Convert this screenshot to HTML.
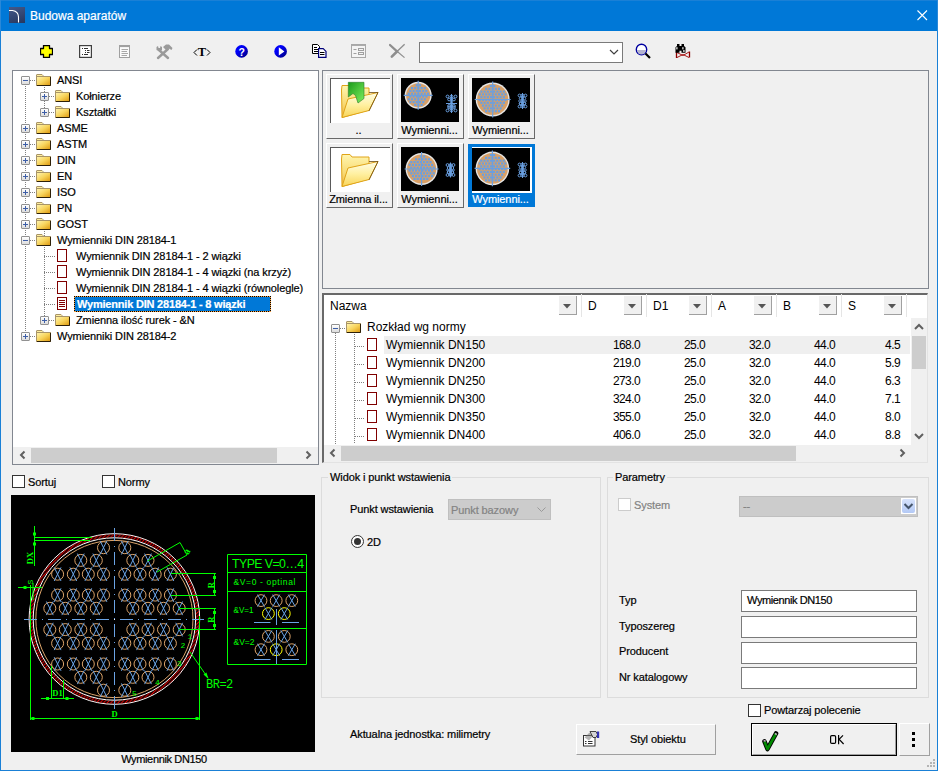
<!DOCTYPE html><html><head><meta charset="utf-8"><style>
*{box-sizing:border-box;margin:0;padding:0}
html,body{width:938px;height:771px;overflow:hidden;background:#f0f0f0;font-family:"Liberation Sans",sans-serif;font-size:11px;color:#000}
.a{position:absolute}
.t{position:absolute;white-space:nowrap;line-height:13px;letter-spacing:-0.1px;-webkit-text-stroke:0.2px currentColor}
.box{position:absolute;width:9px;height:9px;border:1px solid #919191;border-radius:1px;background:linear-gradient(#fff,#dcdcdc)}
.box:before{content:"";position:absolute;left:1px;top:3px;width:5px;height:1px;background:#3d5ea7}
.box.p:after{content:"";position:absolute;left:3px;top:1px;width:1px;height:5px;background:#3d5ea7}
.doc{position:absolute;width:10px;height:13px;border:1px solid #800000;background:#fff}
.panel{position:absolute;border:1px solid #828790;background:#fff}
.cb{position:absolute;width:13px;height:13px;border:1px solid #333;background:#fff}
.tb{position:absolute;border:1px solid #7a7a7a;background:#fff}
</style></head><body>
<div class="a" style="left:0;top:0;width:938px;height:771px;border:1px solid #1a80d6;border-top:0"></div>
<div class="a" style="left:0;top:0;width:938px;height:31px;background:#0078d7"></div>
<div class="a" style="left:9px;top:7px;width:16px;height:16px;background:linear-gradient(160deg,#44598a,#26375f)"></div>
<svg class="a" style="left:9px;top:7px" width="16" height="16"><path d="M0 3.5 H3.5 Q9.5 4.5 9.5 10 V15.5" stroke="#fff" stroke-width="1.1" fill="none"/></svg>
<div class="t" style="left:30px;top:9px;font-size:12px;color:#fff;line-height:15px;letter-spacing:0">Budowa aparatów</div>
<svg class="a" style="left:917px;top:10px" width="11" height="11"><path d="M0.5 0.5L10 10M10 0.5L0.5 10" stroke="#fff" stroke-width="1.1"/></svg>
<div class="a" style="left:0;top:0;width:938px;height:1px;background:#1a80d6"></div>
<div class="a" style="left:937px;top:0;width:1px;height:31px;background:#2a88d8"></div>
<div class="a" style="left:0;top:0;width:1px;height:31px;background:#2a88d8"></div>
<svg class="a" style="left:40px;top:45px" width="13" height="13"><path d="M3.5 0.5h6v3h3v6h-3v3h-6v-3h-3v-6h3z" fill="#ffff00" stroke="#000" stroke-width="1.3" stroke-linejoin="round"/></svg>
<svg class="a" style="left:79px;top:45px" width="13" height="13"><rect x="0.6" y="0.6" width="11.8" height="11.8" fill="#fff" stroke="#404040" stroke-width="1.2"/><path d="M3 3.5h1M5 3.5h4M6 5.5h1M8 5.5h2.5M6 7.5h1M8 7.5h2.5M3 9.5h1M5 9.5h4" stroke="#303030"/></svg>
<svg class="a" style="left:119px;top:45px" width="11" height="13"><rect x="0.5" y="0.5" width="10" height="12" fill="#fbfbfb" stroke="#a0a0a0"/><path d="M0.5 1.3h10" stroke="#a0a0a0" stroke-width="1.6"/><path d="M2.5 4.5h6.5M2.5 6.5h5.5M2.5 8.5h6.5M2.5 10.5h5.5" stroke="#a8a8a8"/></svg>
<svg class="a" style="left:155px;top:43px" width="18" height="17"><path d="M3 15 L13 6" stroke="#9a9a9a" stroke-width="2.4" stroke-linecap="round"/><path d="M4 7 L13 15" stroke="#9a9a9a" stroke-width="2.4" stroke-linecap="round"/><path d="M8 4 L11 1.5 L14 1.5 L17.5 5 L16.5 7 L13 5 L11 7 Z" fill="#9a9a9a"/><path d="M1.5 4 L3 3 L3.5 5 L5 5 L5.5 3 L7 4 L7 7 L4.5 8.5 L1.5 7Z" fill="#9a9a9a"/></svg>
<svg class="a" style="left:192px;top:45px" width="20" height="13"><path d="M5 4.5 L2 7.5 L5 10.5" fill="none" stroke="#000" stroke-width="1"/><path d="M15 4.5 L18 7.5 L15 10.5" fill="none" stroke="#000" stroke-width="1"/><text x="10" y="10.8" text-anchor="middle" font-family="Liberation Serif" font-weight="bold" font-size="12.5" fill="#000">T</text></svg>
<svg class="a" style="left:235px;top:45px" width="14" height="14"><defs><linearGradient id="bc" x1="0" y1="0" x2="1" y2="1"><stop offset="0.35" stop-color="#0000f8"/><stop offset="1" stop-color="#000078"/></linearGradient></defs><circle cx="6.6" cy="6.4" r="6.3" fill="url(#bc)"/><text x="6.6" y="10.6" text-anchor="middle" font-family="Liberation Sans" font-weight="bold" font-size="10.5" fill="#fff">?</text></svg>
<svg class="a" style="left:274px;top:45px" width="14" height="14"><circle cx="6.6" cy="6.4" r="6.3" fill="url(#bc)"/><path d="M4.8 2.3 L10.4 6.4 L4.8 10.6Z" fill="#fff"/></svg>
<svg class="a" style="left:312px;top:44px" width="16" height="14"><path d="M0.5 0.5h5l2 2v7h-7z" fill="#fff" stroke="#000"/><path d="M2 3.5h3M2 5.5h4M2 7.5h4" stroke="#000"/><path d="M6.6 4.6h4.6l2.8 2.8v6h-7.4z" fill="#fff" stroke="#00007a" stroke-width="1.2"/><path d="M8 8.5h4.5M8 10.5h4.5" stroke="#000" stroke-width="1"/></svg>
<svg class="a" style="left:351px;top:44px" width="15" height="14"><rect x="0.5" y="0.5" width="14" height="13" fill="#f4f4f4" stroke="#a8a8a8"/><path d="M0.5 1.2h14" stroke="#a8a8a8" stroke-width="1.5"/><path d="M2.5 5.5h3M2.5 9.5h3" stroke="#a0a0a0"/><rect x="7.5" y="4.5" width="5" height="2" fill="none" stroke="#a0a0a0"/><rect x="7.5" y="8.5" width="5" height="2" fill="none" stroke="#a0a0a0"/></svg>
<svg class="a" style="left:389px;top:43px" width="17" height="16"><path d="M1 2 L8 8.3" stroke="#8e8e8e" stroke-width="2.3" stroke-linecap="round"/><path d="M8 8.3 L15.5 14.6" stroke="#8e8e8e" stroke-width="1.2"/><path d="M2.8 13.6 L8 8.5" stroke="#8e8e8e" stroke-width="2.6" stroke-linecap="round"/><path d="M8 8.5 L15.6 1.3" stroke="#8e8e8e" stroke-width="1.3"/></svg>
<div class="tb" style="left:419px;top:42px;width:204px;height:21px;border-color:#7a7a7a"></div>
<svg class="a" style="left:609px;top:49px" width="11" height="7"><path d="M1 1 L5 5 L9 1" fill="none" stroke="#404040" stroke-width="1.2"/></svg>
<svg class="a" style="left:635px;top:43px" width="17" height="17"><circle cx="6.5" cy="6.5" r="5.2" fill="#fff" stroke="#0000a0" stroke-width="1.4"/><path d="M2 7 A4.5 4.5 0 0 0 11 7Z" fill="#b4b4d0"/><path d="M10.5 10.5 L15 15" stroke="#000" stroke-width="2.2"/></svg>
<svg class="a" style="left:675px;top:43px" width="16" height="16"><path d="M1.5 8.5v6.5M14.5 8.5v6" stroke="#8c0000" stroke-width="1.3"/><path d="M2 9.5 L8 12.5 L14 9M2 14.5 L8 11.5 L14 14.5" fill="none" stroke="#a00000" stroke-width="0.9"/><path d="M2 1 h2.5 v2 h2 v-2 h2.5 v2 l1.5 1.2 v5.5 h-4 v-2 h-2 v2 h-4 v-5.5 l1.5 -1.2z" fill="#000"/><rect x="1.3" y="4.2" width="1.2" height="2.2" fill="#fff"/><rect x="7.3" y="4.2" width="1.2" height="2.2" fill="#fff"/><rect x="8.3" y="7" width="1.2" height="2" fill="#fff"/></svg>
<div class="panel" style="left:12px;top:70px;width:307px;height:395px"></div>
<div class="a" style="left:25px;top:86px;width:1px;height:250px;background-image:linear-gradient(#808080 50%,transparent 50%);background-size:1px 2px"></div>
<div class="a" style="left:44px;top:87px;width:1px;height:25px;background-image:linear-gradient(#808080 50%,transparent 50%);background-size:1px 2px"></div>
<div class="a" style="left:44px;top:231px;width:1px;height:89px;background-image:linear-gradient(#808080 50%,transparent 50%);background-size:1px 2px"></div>
<div class="a" style="left:30px;top:80px;width:6px;height:1px;background-image:linear-gradient(90deg,#808080 50%,transparent 50%);background-size:2px 1px"></div>
<div class="box " style="left:21px;top:76px"></div>
<svg class="a" style="left:36px;top:74px" width="16" height="13"><defs><linearGradient id="fg" x1="0" y1="0" x2="1" y2="1"><stop offset="0" stop-color="#fff6b4"/><stop offset="0.5" stop-color="#f8d45c"/><stop offset="1" stop-color="#dc960c"/></linearGradient></defs><path d="M0.5 3 V1 Q0.5 0.5 1 0.5 H6 L7 1.5 V3" fill="#fff0a0" stroke="#a89468" stroke-width="1"/><rect x="0.5" y="2.5" width="14" height="9" fill="url(#fg)" stroke="#a89468" stroke-width="1"/><path d="M1 11.5 H14.5 V3" fill="none" stroke="#2e2008" stroke-width="1"/></svg>
<div class="t" style="left:57px;top:74px;">ANSI</div>
<div class="a" style="left:49px;top:96px;width:6px;height:1px;background-image:linear-gradient(90deg,#808080 50%,transparent 50%);background-size:2px 1px"></div>
<div class="box p" style="left:40px;top:92px"></div>
<svg class="a" style="left:55px;top:90px" width="16" height="13"><defs><linearGradient id="fg" x1="0" y1="0" x2="1" y2="1"><stop offset="0" stop-color="#fff6b4"/><stop offset="0.5" stop-color="#f8d45c"/><stop offset="1" stop-color="#dc960c"/></linearGradient></defs><path d="M0.5 3 V1 Q0.5 0.5 1 0.5 H6 L7 1.5 V3" fill="#fff0a0" stroke="#a89468" stroke-width="1"/><rect x="0.5" y="2.5" width="14" height="9" fill="url(#fg)" stroke="#a89468" stroke-width="1"/><path d="M1 11.5 H14.5 V3" fill="none" stroke="#2e2008" stroke-width="1"/></svg>
<div class="t" style="left:76px;top:90px;">Kołnierze</div>
<div class="a" style="left:49px;top:112px;width:6px;height:1px;background-image:linear-gradient(90deg,#808080 50%,transparent 50%);background-size:2px 1px"></div>
<div class="box p" style="left:40px;top:108px"></div>
<svg class="a" style="left:55px;top:106px" width="16" height="13"><defs><linearGradient id="fg" x1="0" y1="0" x2="1" y2="1"><stop offset="0" stop-color="#fff6b4"/><stop offset="0.5" stop-color="#f8d45c"/><stop offset="1" stop-color="#dc960c"/></linearGradient></defs><path d="M0.5 3 V1 Q0.5 0.5 1 0.5 H6 L7 1.5 V3" fill="#fff0a0" stroke="#a89468" stroke-width="1"/><rect x="0.5" y="2.5" width="14" height="9" fill="url(#fg)" stroke="#a89468" stroke-width="1"/><path d="M1 11.5 H14.5 V3" fill="none" stroke="#2e2008" stroke-width="1"/></svg>
<div class="t" style="left:76px;top:106px;">Kształtki</div>
<div class="a" style="left:30px;top:128px;width:6px;height:1px;background-image:linear-gradient(90deg,#808080 50%,transparent 50%);background-size:2px 1px"></div>
<div class="box p" style="left:21px;top:124px"></div>
<svg class="a" style="left:36px;top:122px" width="16" height="13"><defs><linearGradient id="fg" x1="0" y1="0" x2="1" y2="1"><stop offset="0" stop-color="#fff6b4"/><stop offset="0.5" stop-color="#f8d45c"/><stop offset="1" stop-color="#dc960c"/></linearGradient></defs><path d="M0.5 3 V1 Q0.5 0.5 1 0.5 H6 L7 1.5 V3" fill="#fff0a0" stroke="#a89468" stroke-width="1"/><rect x="0.5" y="2.5" width="14" height="9" fill="url(#fg)" stroke="#a89468" stroke-width="1"/><path d="M1 11.5 H14.5 V3" fill="none" stroke="#2e2008" stroke-width="1"/></svg>
<div class="t" style="left:57px;top:122px;">ASME</div>
<div class="a" style="left:30px;top:144px;width:6px;height:1px;background-image:linear-gradient(90deg,#808080 50%,transparent 50%);background-size:2px 1px"></div>
<div class="box p" style="left:21px;top:140px"></div>
<svg class="a" style="left:36px;top:138px" width="16" height="13"><defs><linearGradient id="fg" x1="0" y1="0" x2="1" y2="1"><stop offset="0" stop-color="#fff6b4"/><stop offset="0.5" stop-color="#f8d45c"/><stop offset="1" stop-color="#dc960c"/></linearGradient></defs><path d="M0.5 3 V1 Q0.5 0.5 1 0.5 H6 L7 1.5 V3" fill="#fff0a0" stroke="#a89468" stroke-width="1"/><rect x="0.5" y="2.5" width="14" height="9" fill="url(#fg)" stroke="#a89468" stroke-width="1"/><path d="M1 11.5 H14.5 V3" fill="none" stroke="#2e2008" stroke-width="1"/></svg>
<div class="t" style="left:57px;top:138px;">ASTM</div>
<div class="a" style="left:30px;top:160px;width:6px;height:1px;background-image:linear-gradient(90deg,#808080 50%,transparent 50%);background-size:2px 1px"></div>
<div class="box p" style="left:21px;top:156px"></div>
<svg class="a" style="left:36px;top:154px" width="16" height="13"><defs><linearGradient id="fg" x1="0" y1="0" x2="1" y2="1"><stop offset="0" stop-color="#fff6b4"/><stop offset="0.5" stop-color="#f8d45c"/><stop offset="1" stop-color="#dc960c"/></linearGradient></defs><path d="M0.5 3 V1 Q0.5 0.5 1 0.5 H6 L7 1.5 V3" fill="#fff0a0" stroke="#a89468" stroke-width="1"/><rect x="0.5" y="2.5" width="14" height="9" fill="url(#fg)" stroke="#a89468" stroke-width="1"/><path d="M1 11.5 H14.5 V3" fill="none" stroke="#2e2008" stroke-width="1"/></svg>
<div class="t" style="left:57px;top:154px;">DIN</div>
<div class="a" style="left:30px;top:176px;width:6px;height:1px;background-image:linear-gradient(90deg,#808080 50%,transparent 50%);background-size:2px 1px"></div>
<div class="box p" style="left:21px;top:172px"></div>
<svg class="a" style="left:36px;top:170px" width="16" height="13"><defs><linearGradient id="fg" x1="0" y1="0" x2="1" y2="1"><stop offset="0" stop-color="#fff6b4"/><stop offset="0.5" stop-color="#f8d45c"/><stop offset="1" stop-color="#dc960c"/></linearGradient></defs><path d="M0.5 3 V1 Q0.5 0.5 1 0.5 H6 L7 1.5 V3" fill="#fff0a0" stroke="#a89468" stroke-width="1"/><rect x="0.5" y="2.5" width="14" height="9" fill="url(#fg)" stroke="#a89468" stroke-width="1"/><path d="M1 11.5 H14.5 V3" fill="none" stroke="#2e2008" stroke-width="1"/></svg>
<div class="t" style="left:57px;top:170px;">EN</div>
<div class="a" style="left:30px;top:192px;width:6px;height:1px;background-image:linear-gradient(90deg,#808080 50%,transparent 50%);background-size:2px 1px"></div>
<div class="box p" style="left:21px;top:188px"></div>
<svg class="a" style="left:36px;top:186px" width="16" height="13"><defs><linearGradient id="fg" x1="0" y1="0" x2="1" y2="1"><stop offset="0" stop-color="#fff6b4"/><stop offset="0.5" stop-color="#f8d45c"/><stop offset="1" stop-color="#dc960c"/></linearGradient></defs><path d="M0.5 3 V1 Q0.5 0.5 1 0.5 H6 L7 1.5 V3" fill="#fff0a0" stroke="#a89468" stroke-width="1"/><rect x="0.5" y="2.5" width="14" height="9" fill="url(#fg)" stroke="#a89468" stroke-width="1"/><path d="M1 11.5 H14.5 V3" fill="none" stroke="#2e2008" stroke-width="1"/></svg>
<div class="t" style="left:57px;top:186px;">ISO</div>
<div class="a" style="left:30px;top:208px;width:6px;height:1px;background-image:linear-gradient(90deg,#808080 50%,transparent 50%);background-size:2px 1px"></div>
<div class="box p" style="left:21px;top:204px"></div>
<svg class="a" style="left:36px;top:202px" width="16" height="13"><defs><linearGradient id="fg" x1="0" y1="0" x2="1" y2="1"><stop offset="0" stop-color="#fff6b4"/><stop offset="0.5" stop-color="#f8d45c"/><stop offset="1" stop-color="#dc960c"/></linearGradient></defs><path d="M0.5 3 V1 Q0.5 0.5 1 0.5 H6 L7 1.5 V3" fill="#fff0a0" stroke="#a89468" stroke-width="1"/><rect x="0.5" y="2.5" width="14" height="9" fill="url(#fg)" stroke="#a89468" stroke-width="1"/><path d="M1 11.5 H14.5 V3" fill="none" stroke="#2e2008" stroke-width="1"/></svg>
<div class="t" style="left:57px;top:202px;">PN</div>
<div class="a" style="left:30px;top:224px;width:6px;height:1px;background-image:linear-gradient(90deg,#808080 50%,transparent 50%);background-size:2px 1px"></div>
<div class="box p" style="left:21px;top:220px"></div>
<svg class="a" style="left:36px;top:218px" width="16" height="13"><defs><linearGradient id="fg" x1="0" y1="0" x2="1" y2="1"><stop offset="0" stop-color="#fff6b4"/><stop offset="0.5" stop-color="#f8d45c"/><stop offset="1" stop-color="#dc960c"/></linearGradient></defs><path d="M0.5 3 V1 Q0.5 0.5 1 0.5 H6 L7 1.5 V3" fill="#fff0a0" stroke="#a89468" stroke-width="1"/><rect x="0.5" y="2.5" width="14" height="9" fill="url(#fg)" stroke="#a89468" stroke-width="1"/><path d="M1 11.5 H14.5 V3" fill="none" stroke="#2e2008" stroke-width="1"/></svg>
<div class="t" style="left:57px;top:218px;">GOST</div>
<div class="a" style="left:30px;top:240px;width:6px;height:1px;background-image:linear-gradient(90deg,#808080 50%,transparent 50%);background-size:2px 1px"></div>
<div class="box " style="left:21px;top:236px"></div>
<svg class="a" style="left:36px;top:234px" width="16" height="13"><defs><linearGradient id="fg" x1="0" y1="0" x2="1" y2="1"><stop offset="0" stop-color="#fff6b4"/><stop offset="0.5" stop-color="#f8d45c"/><stop offset="1" stop-color="#dc960c"/></linearGradient></defs><path d="M0.5 3 V1 Q0.5 0.5 1 0.5 H6 L7 1.5 V3" fill="#fff0a0" stroke="#a89468" stroke-width="1"/><rect x="0.5" y="2.5" width="14" height="9" fill="url(#fg)" stroke="#a89468" stroke-width="1"/><path d="M1 11.5 H14.5 V3" fill="none" stroke="#2e2008" stroke-width="1"/></svg>
<div class="t" style="left:57px;top:234px;">Wymienniki DIN 28184-1</div>
<div class="a" style="left:44px;top:256px;width:11px;height:1px;background-image:linear-gradient(90deg,#808080 50%,transparent 50%);background-size:2px 1px"></div>
<div class="doc" style="left:57px;top:249px"></div>
<div class="t" style="left:76px;top:250px;">Wymiennik DIN 28184-1 - 2 wiązki</div>
<div class="a" style="left:44px;top:272px;width:11px;height:1px;background-image:linear-gradient(90deg,#808080 50%,transparent 50%);background-size:2px 1px"></div>
<div class="doc" style="left:57px;top:265px"></div>
<div class="t" style="left:76px;top:266px;">Wymiennik DIN 28184-1 - 4 wiązki (na krzyż)</div>
<div class="a" style="left:44px;top:288px;width:11px;height:1px;background-image:linear-gradient(90deg,#808080 50%,transparent 50%);background-size:2px 1px"></div>
<div class="doc" style="left:57px;top:281px"></div>
<div class="t" style="left:76px;top:282px;">Wymiennik DIN 28184-1 - 4 wiązki (równolegle)</div>
<div class="a" style="left:44px;top:304px;width:11px;height:1px;background-image:linear-gradient(90deg,#808080 50%,transparent 50%);background-size:2px 1px"></div>
<div class="doc" style="left:57px;top:297px"></div>
<svg class="a" style="left:57px;top:297px" width="10" height="13"><path d="M2 3.5h6M2 5.5h6M2 7.5h6M2 9.5h6" stroke="#800000"/></svg>
<div class="a" style="left:74px;top:296px;width:197px;height:16px;background:#0078d7"></div>
<div class="a" style="left:74px;top:296px;width:197px;height:1px;background:repeating-linear-gradient(90deg,#000 0 1px,#f7a241 1px 2px)"></div>
<div class="a" style="left:74px;top:311px;width:197px;height:1px;background:repeating-linear-gradient(90deg,#000 0 1px,#f7a241 1px 2px)"></div>
<div class="a" style="left:74px;top:296px;width:1px;height:16px;background:repeating-linear-gradient(#000 0 1px,#f7a241 1px 2px)"></div>
<div class="a" style="left:270px;top:296px;width:1px;height:16px;background:repeating-linear-gradient(#000 0 1px,#f7a241 1px 2px)"></div>
<div class="t" style="left:77px;top:298px;color:#fff;font-weight:bold;letter-spacing:-0.2px">Wymiennik DIN 28184-1 - 8 wiązki</div>
<div class="a" style="left:49px;top:320px;width:6px;height:1px;background-image:linear-gradient(90deg,#808080 50%,transparent 50%);background-size:2px 1px"></div>
<div class="box p" style="left:40px;top:316px"></div>
<svg class="a" style="left:55px;top:314px" width="16" height="13"><defs><linearGradient id="fg" x1="0" y1="0" x2="1" y2="1"><stop offset="0" stop-color="#fff6b4"/><stop offset="0.5" stop-color="#f8d45c"/><stop offset="1" stop-color="#dc960c"/></linearGradient></defs><path d="M0.5 3 V1 Q0.5 0.5 1 0.5 H6 L7 1.5 V3" fill="#fff0a0" stroke="#a89468" stroke-width="1"/><rect x="0.5" y="2.5" width="14" height="9" fill="url(#fg)" stroke="#a89468" stroke-width="1"/><path d="M1 11.5 H14.5 V3" fill="none" stroke="#2e2008" stroke-width="1"/></svg>
<div class="t" style="left:76px;top:314px;">Zmienna ilość rurek - &amp;N</div>
<div class="a" style="left:30px;top:336px;width:6px;height:1px;background-image:linear-gradient(90deg,#808080 50%,transparent 50%);background-size:2px 1px"></div>
<div class="box p" style="left:21px;top:332px"></div>
<svg class="a" style="left:36px;top:330px" width="16" height="13"><defs><linearGradient id="fg" x1="0" y1="0" x2="1" y2="1"><stop offset="0" stop-color="#fff6b4"/><stop offset="0.5" stop-color="#f8d45c"/><stop offset="1" stop-color="#dc960c"/></linearGradient></defs><path d="M0.5 3 V1 Q0.5 0.5 1 0.5 H6 L7 1.5 V3" fill="#fff0a0" stroke="#a89468" stroke-width="1"/><rect x="0.5" y="2.5" width="14" height="9" fill="url(#fg)" stroke="#a89468" stroke-width="1"/><path d="M1 11.5 H14.5 V3" fill="none" stroke="#2e2008" stroke-width="1"/></svg>
<div class="t" style="left:57px;top:330px;">Wymienniki DIN 28184-2</div>
<div class="a" style="left:13px;top:447px;width:305px;height:17px;background:#f0f0f0"></div>
<div class="a" style="left:31px;top:448px;width:246px;height:15px;background:#cdcdcd"></div>
<svg class="a" style="left:18px;top:450px" width="10" height="10"><path d="M6.5 1.5 L3 5 L6.5 8.5" fill="none" stroke="#606060" stroke-width="2"/></svg>
<svg class="a" style="left:303px;top:450px" width="10" height="10"><path d="M3.5 1.5 L7 5 L3.5 8.5" fill="none" stroke="#606060" stroke-width="2"/></svg>
<div class="a" style="left:322px;top:70px;width:607px;height:219px;border:1px solid #828790;background:#f0f0f0"></div>
<div class="a" style="left:326px;top:74px;width:67px;height:65px;border:1px solid #fff;border-right-color:#696969;border-bottom-color:#696969;background:#f0f0f0"></div>
<div class="a" style="left:330px;top:78px;width:60px;height:45px;background:#fff;border-left:1px solid #5a5a5a;border-top:1px solid #5a5a5a"></div>
<svg class="a" style="left:331px;top:79px" width="58" height="44"><defs><linearGradient id="fyb" x1="0" y1="0" x2="0" y2="1"><stop offset="0" stop-color="#fff6b0"/><stop offset="0.6" stop-color="#f8d870"/><stop offset="1" stop-color="#eeb040"/></linearGradient><linearGradient id="fyf" x1="0" y1="0" x2="0" y2="1"><stop offset="0" stop-color="#fffde8"/><stop offset="0.5" stop-color="#fff0a0"/><stop offset="1" stop-color="#f8d458"/></linearGradient><linearGradient id="gg" x1="0" y1="0" x2="1" y2="1"><stop offset="0" stop-color="#1a9a1a"/><stop offset="1" stop-color="#80f060"/></linearGradient></defs><path d="M10.5 11 L11 6.5 L19 6.5 L21 9 L38 9 L38 31 L11 38.5 Z" fill="url(#fyb)" stroke="#e0a418" stroke-width="1"/><path d="M11 38.5 L17 20 L47 13.5 L38 31.5 Z" fill="url(#fyf)" stroke="#e0a418" stroke-width="1"/><path d="M38 13.5 L47 13.5 L38 32" fill="none" stroke="#6a4a10" stroke-width="0.8"/><path d="M17.3 3.3 L33 3.3 L33 19.5 L27 24 L24.5 16.5 L22 14.5 L17.3 18Z" fill="url(#gg)" stroke="#2a7a2a" stroke-width="0.6"/></svg>
<div class="t" style="left:325px;top:124px;width:67px;text-align:center;color:#000">..</div>
<div class="a" style="left:397px;top:74px;width:67px;height:65px;border:1px solid #fff;border-right-color:#696969;border-bottom-color:#696969;background:#f0f0f0"></div>
<svg class="a" style="left:401px;top:78px" width="58" height="44"><rect x="0" y="0" width="58" height="44" fill="#000"/><circle cx="17.19999999999999" cy="17.299999999999997" r="13.5" fill="#e6e6e6"/><circle cx="17.19999999999999" cy="17.299999999999997" r="12.1" fill="#d9a066"/><rect x="14.7" y="6.2" width="2.2" height="2.2" fill="#6a9fe0"/><rect x="17.9" y="6.2" width="2.2" height="2.2" fill="#6a9fe0"/><rect x="9.9" y="9.0" width="2.2" height="2.2" fill="#6a9fe0"/><rect x="13.1" y="9.0" width="2.2" height="2.2" fill="#6a9fe0"/><rect x="16.3" y="9.0" width="2.2" height="2.2" fill="#6a9fe0"/><rect x="19.5" y="9.0" width="2.2" height="2.2" fill="#6a9fe0"/><rect x="22.7" y="9.0" width="2.2" height="2.2" fill="#6a9fe0"/><rect x="8.3" y="11.8" width="2.2" height="2.2" fill="#6a9fe0"/><rect x="11.5" y="11.8" width="2.2" height="2.2" fill="#6a9fe0"/><rect x="14.7" y="11.8" width="2.2" height="2.2" fill="#6a9fe0"/><rect x="17.9" y="11.8" width="2.2" height="2.2" fill="#6a9fe0"/><rect x="21.1" y="11.8" width="2.2" height="2.2" fill="#6a9fe0"/><rect x="24.3" y="11.8" width="2.2" height="2.2" fill="#6a9fe0"/><rect x="6.7" y="14.6" width="2.2" height="2.2" fill="#6a9fe0"/><rect x="9.9" y="14.6" width="2.2" height="2.2" fill="#6a9fe0"/><rect x="13.1" y="14.6" width="2.2" height="2.2" fill="#6a9fe0"/><rect x="16.3" y="14.6" width="2.2" height="2.2" fill="#6a9fe0"/><rect x="19.5" y="14.6" width="2.2" height="2.2" fill="#6a9fe0"/><rect x="22.7" y="14.6" width="2.2" height="2.2" fill="#6a9fe0"/><rect x="25.9" y="14.6" width="2.2" height="2.2" fill="#6a9fe0"/><rect x="8.3" y="17.4" width="2.2" height="2.2" fill="#6a9fe0"/><rect x="11.5" y="17.4" width="2.2" height="2.2" fill="#6a9fe0"/><rect x="14.7" y="17.4" width="2.2" height="2.2" fill="#6a9fe0"/><rect x="17.9" y="17.4" width="2.2" height="2.2" fill="#6a9fe0"/><rect x="21.1" y="17.4" width="2.2" height="2.2" fill="#6a9fe0"/><rect x="24.3" y="17.4" width="2.2" height="2.2" fill="#6a9fe0"/><rect x="6.7" y="20.2" width="2.2" height="2.2" fill="#6a9fe0"/><rect x="9.9" y="20.2" width="2.2" height="2.2" fill="#6a9fe0"/><rect x="13.1" y="20.2" width="2.2" height="2.2" fill="#6a9fe0"/><rect x="16.3" y="20.2" width="2.2" height="2.2" fill="#6a9fe0"/><rect x="19.5" y="20.2" width="2.2" height="2.2" fill="#6a9fe0"/><rect x="22.7" y="20.2" width="2.2" height="2.2" fill="#6a9fe0"/><rect x="8.3" y="23.0" width="2.2" height="2.2" fill="#6a9fe0"/><rect x="11.5" y="23.0" width="2.2" height="2.2" fill="#6a9fe0"/><rect x="14.7" y="23.0" width="2.2" height="2.2" fill="#6a9fe0"/><rect x="17.9" y="23.0" width="2.2" height="2.2" fill="#6a9fe0"/><rect x="21.1" y="23.0" width="2.2" height="2.2" fill="#6a9fe0"/><rect x="13.1" y="25.8" width="2.2" height="2.2" fill="#6a9fe0"/><rect x="16.3" y="25.8" width="2.2" height="2.2" fill="#6a9fe0"/><rect x="19.5" y="25.8" width="2.2" height="2.2" fill="#6a9fe0"/><path d="M2.6999999999999886 17.299999999999997h29.0M17.19999999999999 2.799999999999997v29.0" stroke="#6a9fe0" stroke-width="1.2"/><circle cx="46.5" cy="18.5" r="1.4" fill="none" stroke="#6a9fe0" stroke-width="1"/><circle cx="50.5" cy="18.5" r="1.4" fill="none" stroke="#6a9fe0" stroke-width="1"/><circle cx="54.5" cy="18.5" r="1.4" fill="none" stroke="#6a9fe0" stroke-width="1"/><circle cx="48.1" cy="21.5" r="1.4" fill="none" stroke="#6a9fe0" stroke-width="1"/><circle cx="52.9" cy="21.5" r="1.4" fill="none" stroke="#6a9fe0" stroke-width="1"/><circle cx="48.1" cy="28.0" r="1.4" fill="none" stroke="#6a9fe0" stroke-width="1"/><circle cx="52.9" cy="28.0" r="1.4" fill="none" stroke="#6a9fe0" stroke-width="1"/><circle cx="48.1" cy="29.5" r="1.4" fill="none" stroke="#6a9fe0" stroke-width="1"/><circle cx="52.9" cy="29.5" r="1.4" fill="none" stroke="#6a9fe0" stroke-width="1"/><circle cx="46.5" cy="32.5" r="1.4" fill="none" stroke="#6a9fe0" stroke-width="1"/><circle cx="50.5" cy="32.5" r="1.4" fill="none" stroke="#6a9fe0" stroke-width="1"/><circle cx="54.5" cy="32.5" r="1.4" fill="none" stroke="#6a9fe0" stroke-width="1"/><path d="M45 25.5h11M50.5 16v19" stroke="#6a9fe0" stroke-width="1"/><rect x="49.0" y="19" width="3" height="13" fill="#6a9fe0" opacity="0.7"/></svg>
<div class="t" style="left:396px;top:124px;width:67px;text-align:center;color:#000">Wymienni...</div>
<div class="a" style="left:468px;top:74px;width:67px;height:65px;border:1px solid #fff;border-right-color:#696969;border-bottom-color:#696969;background:#f0f0f0"></div>
<svg class="a" style="left:472px;top:78px" width="58" height="44"><rect x="0" y="0" width="58" height="44" fill="#000"/><circle cx="20.69999999999999" cy="21.5" r="17" fill="#e6e6e6"/><circle cx="20.69999999999999" cy="21.5" r="15.6" fill="#d9a066"/><rect x="17.9" y="6.9" width="2.2" height="2.2" fill="#6a9fe0"/><rect x="21.1" y="6.9" width="2.2" height="2.2" fill="#6a9fe0"/><rect x="13.1" y="9.7" width="2.2" height="2.2" fill="#6a9fe0"/><rect x="16.3" y="9.7" width="2.2" height="2.2" fill="#6a9fe0"/><rect x="19.5" y="9.7" width="2.2" height="2.2" fill="#6a9fe0"/><rect x="22.7" y="9.7" width="2.2" height="2.2" fill="#6a9fe0"/><rect x="25.9" y="9.7" width="2.2" height="2.2" fill="#6a9fe0"/><rect x="8.3" y="12.5" width="2.2" height="2.2" fill="#6a9fe0"/><rect x="11.5" y="12.5" width="2.2" height="2.2" fill="#6a9fe0"/><rect x="14.7" y="12.5" width="2.2" height="2.2" fill="#6a9fe0"/><rect x="17.9" y="12.5" width="2.2" height="2.2" fill="#6a9fe0"/><rect x="21.1" y="12.5" width="2.2" height="2.2" fill="#6a9fe0"/><rect x="24.3" y="12.5" width="2.2" height="2.2" fill="#6a9fe0"/><rect x="27.5" y="12.5" width="2.2" height="2.2" fill="#6a9fe0"/><rect x="30.7" y="12.5" width="2.2" height="2.2" fill="#6a9fe0"/><rect x="6.7" y="15.3" width="2.2" height="2.2" fill="#6a9fe0"/><rect x="9.9" y="15.3" width="2.2" height="2.2" fill="#6a9fe0"/><rect x="13.1" y="15.3" width="2.2" height="2.2" fill="#6a9fe0"/><rect x="16.3" y="15.3" width="2.2" height="2.2" fill="#6a9fe0"/><rect x="19.5" y="15.3" width="2.2" height="2.2" fill="#6a9fe0"/><rect x="22.7" y="15.3" width="2.2" height="2.2" fill="#6a9fe0"/><rect x="25.9" y="15.3" width="2.2" height="2.2" fill="#6a9fe0"/><rect x="29.1" y="15.3" width="2.2" height="2.2" fill="#6a9fe0"/><rect x="32.3" y="15.3" width="2.2" height="2.2" fill="#6a9fe0"/><rect x="8.3" y="18.1" width="2.2" height="2.2" fill="#6a9fe0"/><rect x="11.5" y="18.1" width="2.2" height="2.2" fill="#6a9fe0"/><rect x="14.7" y="18.1" width="2.2" height="2.2" fill="#6a9fe0"/><rect x="17.9" y="18.1" width="2.2" height="2.2" fill="#6a9fe0"/><rect x="21.1" y="18.1" width="2.2" height="2.2" fill="#6a9fe0"/><rect x="24.3" y="18.1" width="2.2" height="2.2" fill="#6a9fe0"/><rect x="27.5" y="18.1" width="2.2" height="2.2" fill="#6a9fe0"/><rect x="30.7" y="18.1" width="2.2" height="2.2" fill="#6a9fe0"/><rect x="6.7" y="20.9" width="2.2" height="2.2" fill="#6a9fe0"/><rect x="9.9" y="20.9" width="2.2" height="2.2" fill="#6a9fe0"/><rect x="13.1" y="20.9" width="2.2" height="2.2" fill="#6a9fe0"/><rect x="16.3" y="20.9" width="2.2" height="2.2" fill="#6a9fe0"/><rect x="19.5" y="20.9" width="2.2" height="2.2" fill="#6a9fe0"/><rect x="22.7" y="20.9" width="2.2" height="2.2" fill="#6a9fe0"/><rect x="25.9" y="20.9" width="2.2" height="2.2" fill="#6a9fe0"/><rect x="29.1" y="20.9" width="2.2" height="2.2" fill="#6a9fe0"/><rect x="32.3" y="20.9" width="2.2" height="2.2" fill="#6a9fe0"/><rect x="8.3" y="23.7" width="2.2" height="2.2" fill="#6a9fe0"/><rect x="11.5" y="23.7" width="2.2" height="2.2" fill="#6a9fe0"/><rect x="14.7" y="23.7" width="2.2" height="2.2" fill="#6a9fe0"/><rect x="17.9" y="23.7" width="2.2" height="2.2" fill="#6a9fe0"/><rect x="21.1" y="23.7" width="2.2" height="2.2" fill="#6a9fe0"/><rect x="24.3" y="23.7" width="2.2" height="2.2" fill="#6a9fe0"/><rect x="27.5" y="23.7" width="2.2" height="2.2" fill="#6a9fe0"/><rect x="30.7" y="23.7" width="2.2" height="2.2" fill="#6a9fe0"/><rect x="9.9" y="26.5" width="2.2" height="2.2" fill="#6a9fe0"/><rect x="13.1" y="26.5" width="2.2" height="2.2" fill="#6a9fe0"/><rect x="16.3" y="26.5" width="2.2" height="2.2" fill="#6a9fe0"/><rect x="19.5" y="26.5" width="2.2" height="2.2" fill="#6a9fe0"/><rect x="22.7" y="26.5" width="2.2" height="2.2" fill="#6a9fe0"/><rect x="25.9" y="26.5" width="2.2" height="2.2" fill="#6a9fe0"/><rect x="29.1" y="26.5" width="2.2" height="2.2" fill="#6a9fe0"/><rect x="11.5" y="29.3" width="2.2" height="2.2" fill="#6a9fe0"/><rect x="14.7" y="29.3" width="2.2" height="2.2" fill="#6a9fe0"/><rect x="17.9" y="29.3" width="2.2" height="2.2" fill="#6a9fe0"/><rect x="21.1" y="29.3" width="2.2" height="2.2" fill="#6a9fe0"/><rect x="24.3" y="29.3" width="2.2" height="2.2" fill="#6a9fe0"/><rect x="27.5" y="29.3" width="2.2" height="2.2" fill="#6a9fe0"/><rect x="13.1" y="32.1" width="2.2" height="2.2" fill="#6a9fe0"/><rect x="16.3" y="32.1" width="2.2" height="2.2" fill="#6a9fe0"/><rect x="19.5" y="32.1" width="2.2" height="2.2" fill="#6a9fe0"/><rect x="22.7" y="32.1" width="2.2" height="2.2" fill="#6a9fe0"/><rect x="25.9" y="32.1" width="2.2" height="2.2" fill="#6a9fe0"/><path d="M2.6999999999999886 21.5h36M20.69999999999999 3.5v36" stroke="#6a9fe0" stroke-width="1.2"/><circle cx="47.5" cy="17.5" r="1.4" fill="none" stroke="#6a9fe0" stroke-width="1"/><circle cx="50.5" cy="17.5" r="1.4" fill="none" stroke="#6a9fe0" stroke-width="1"/><circle cx="53.5" cy="17.5" r="1.4" fill="none" stroke="#6a9fe0" stroke-width="1"/><circle cx="48.7" cy="20.5" r="1.4" fill="none" stroke="#6a9fe0" stroke-width="1"/><circle cx="52.3" cy="20.5" r="1.4" fill="none" stroke="#6a9fe0" stroke-width="1"/><circle cx="48.7" cy="25.5" r="1.4" fill="none" stroke="#6a9fe0" stroke-width="1"/><circle cx="52.3" cy="25.5" r="1.4" fill="none" stroke="#6a9fe0" stroke-width="1"/><circle cx="48.7" cy="25.5" r="1.4" fill="none" stroke="#6a9fe0" stroke-width="1"/><circle cx="52.3" cy="25.5" r="1.4" fill="none" stroke="#6a9fe0" stroke-width="1"/><circle cx="47.5" cy="28.5" r="1.4" fill="none" stroke="#6a9fe0" stroke-width="1"/><circle cx="50.5" cy="28.5" r="1.4" fill="none" stroke="#6a9fe0" stroke-width="1"/><circle cx="53.5" cy="28.5" r="1.4" fill="none" stroke="#6a9fe0" stroke-width="1"/><path d="M46 23.0h9M50.5 15v16" stroke="#6a9fe0" stroke-width="1"/><rect x="49.0" y="18" width="3" height="10" fill="#6a9fe0" opacity="0.7"/></svg>
<div class="t" style="left:467px;top:124px;width:67px;text-align:center;color:#000">Wymienni...</div>
<div class="a" style="left:326px;top:143px;width:67px;height:65px;border:1px solid #fff;border-right-color:#696969;border-bottom-color:#696969;background:#f0f0f0"></div>
<div class="a" style="left:330px;top:147px;width:60px;height:45px;background:#fff;border-left:1px solid #5a5a5a;border-top:1px solid #5a5a5a"></div>
<svg class="a" style="left:331px;top:148px" width="58" height="44"><defs><linearGradient id="fyb" x1="0" y1="0" x2="0" y2="1"><stop offset="0" stop-color="#fff6b0"/><stop offset="0.6" stop-color="#f8d870"/><stop offset="1" stop-color="#eeb040"/></linearGradient><linearGradient id="fyf" x1="0" y1="0" x2="0" y2="1"><stop offset="0" stop-color="#fffde8"/><stop offset="0.5" stop-color="#fff0a0"/><stop offset="1" stop-color="#f8d458"/></linearGradient><linearGradient id="gg" x1="0" y1="0" x2="1" y2="1"><stop offset="0" stop-color="#1a9a1a"/><stop offset="1" stop-color="#80f060"/></linearGradient></defs><path d="M10.5 11 L11 6.5 L19 6.5 L21 9 L38 9 L38 31 L11 38.5 Z" fill="url(#fyb)" stroke="#e0a418" stroke-width="1"/><path d="M11 38.5 L17 20 L47 13.5 L38 31.5 Z" fill="url(#fyf)" stroke="#e0a418" stroke-width="1"/><path d="M38 13.5 L47 13.5 L38 32" fill="none" stroke="#6a4a10" stroke-width="0.8"/></svg>
<div class="t" style="left:325px;top:193px;width:67px;text-align:center;color:#000">Zmienna il...</div>
<div class="a" style="left:397px;top:143px;width:67px;height:65px;border:1px solid #fff;border-right-color:#696969;border-bottom-color:#696969;background:#f0f0f0"></div>
<svg class="a" style="left:401px;top:147px" width="58" height="44"><rect x="0" y="0" width="58" height="44" fill="#000"/><circle cx="20.600000000000023" cy="22" r="16" fill="#e6e6e6"/><circle cx="20.600000000000023" cy="22" r="14.6" fill="#d9a066"/><rect x="18.8" y="8.4" width="2.2" height="2.2" fill="#6a9fe0"/><rect x="22.0" y="8.4" width="2.2" height="2.2" fill="#6a9fe0"/><rect x="14.0" y="11.2" width="2.2" height="2.2" fill="#6a9fe0"/><rect x="17.2" y="11.2" width="2.2" height="2.2" fill="#6a9fe0"/><rect x="20.4" y="11.2" width="2.2" height="2.2" fill="#6a9fe0"/><rect x="23.6" y="11.2" width="2.2" height="2.2" fill="#6a9fe0"/><rect x="26.8" y="11.2" width="2.2" height="2.2" fill="#6a9fe0"/><rect x="9.2" y="14.0" width="2.2" height="2.2" fill="#6a9fe0"/><rect x="12.4" y="14.0" width="2.2" height="2.2" fill="#6a9fe0"/><rect x="15.6" y="14.0" width="2.2" height="2.2" fill="#6a9fe0"/><rect x="18.8" y="14.0" width="2.2" height="2.2" fill="#6a9fe0"/><rect x="22.0" y="14.0" width="2.2" height="2.2" fill="#6a9fe0"/><rect x="25.2" y="14.0" width="2.2" height="2.2" fill="#6a9fe0"/><rect x="28.4" y="14.0" width="2.2" height="2.2" fill="#6a9fe0"/><rect x="7.6" y="16.8" width="2.2" height="2.2" fill="#6a9fe0"/><rect x="10.8" y="16.8" width="2.2" height="2.2" fill="#6a9fe0"/><rect x="14.0" y="16.8" width="2.2" height="2.2" fill="#6a9fe0"/><rect x="17.2" y="16.8" width="2.2" height="2.2" fill="#6a9fe0"/><rect x="20.4" y="16.8" width="2.2" height="2.2" fill="#6a9fe0"/><rect x="23.6" y="16.8" width="2.2" height="2.2" fill="#6a9fe0"/><rect x="26.8" y="16.8" width="2.2" height="2.2" fill="#6a9fe0"/><rect x="30.0" y="16.8" width="2.2" height="2.2" fill="#6a9fe0"/><rect x="9.2" y="19.6" width="2.2" height="2.2" fill="#6a9fe0"/><rect x="12.4" y="19.6" width="2.2" height="2.2" fill="#6a9fe0"/><rect x="15.6" y="19.6" width="2.2" height="2.2" fill="#6a9fe0"/><rect x="18.8" y="19.6" width="2.2" height="2.2" fill="#6a9fe0"/><rect x="22.0" y="19.6" width="2.2" height="2.2" fill="#6a9fe0"/><rect x="25.2" y="19.6" width="2.2" height="2.2" fill="#6a9fe0"/><rect x="28.4" y="19.6" width="2.2" height="2.2" fill="#6a9fe0"/><rect x="31.6" y="19.6" width="2.2" height="2.2" fill="#6a9fe0"/><rect x="7.6" y="22.4" width="2.2" height="2.2" fill="#6a9fe0"/><rect x="10.8" y="22.4" width="2.2" height="2.2" fill="#6a9fe0"/><rect x="14.0" y="22.4" width="2.2" height="2.2" fill="#6a9fe0"/><rect x="17.2" y="22.4" width="2.2" height="2.2" fill="#6a9fe0"/><rect x="20.4" y="22.4" width="2.2" height="2.2" fill="#6a9fe0"/><rect x="23.6" y="22.4" width="2.2" height="2.2" fill="#6a9fe0"/><rect x="26.8" y="22.4" width="2.2" height="2.2" fill="#6a9fe0"/><rect x="30.0" y="22.4" width="2.2" height="2.2" fill="#6a9fe0"/><rect x="9.2" y="25.2" width="2.2" height="2.2" fill="#6a9fe0"/><rect x="12.4" y="25.2" width="2.2" height="2.2" fill="#6a9fe0"/><rect x="15.6" y="25.2" width="2.2" height="2.2" fill="#6a9fe0"/><rect x="18.8" y="25.2" width="2.2" height="2.2" fill="#6a9fe0"/><rect x="22.0" y="25.2" width="2.2" height="2.2" fill="#6a9fe0"/><rect x="25.2" y="25.2" width="2.2" height="2.2" fill="#6a9fe0"/><rect x="28.4" y="25.2" width="2.2" height="2.2" fill="#6a9fe0"/><rect x="31.6" y="25.2" width="2.2" height="2.2" fill="#6a9fe0"/><rect x="10.8" y="28.0" width="2.2" height="2.2" fill="#6a9fe0"/><rect x="14.0" y="28.0" width="2.2" height="2.2" fill="#6a9fe0"/><rect x="17.2" y="28.0" width="2.2" height="2.2" fill="#6a9fe0"/><rect x="20.4" y="28.0" width="2.2" height="2.2" fill="#6a9fe0"/><rect x="23.6" y="28.0" width="2.2" height="2.2" fill="#6a9fe0"/><rect x="26.8" y="28.0" width="2.2" height="2.2" fill="#6a9fe0"/><rect x="30.0" y="28.0" width="2.2" height="2.2" fill="#6a9fe0"/><rect x="12.4" y="30.8" width="2.2" height="2.2" fill="#6a9fe0"/><rect x="15.6" y="30.8" width="2.2" height="2.2" fill="#6a9fe0"/><rect x="18.8" y="30.8" width="2.2" height="2.2" fill="#6a9fe0"/><rect x="22.0" y="30.8" width="2.2" height="2.2" fill="#6a9fe0"/><rect x="25.2" y="30.8" width="2.2" height="2.2" fill="#6a9fe0"/><path d="M3.6000000000000227 22h34M20.600000000000023 5v34" stroke="#6a9fe0" stroke-width="1.2"/><circle cx="46.5" cy="18.0" r="1.4" fill="none" stroke="#6a9fe0" stroke-width="1"/><circle cx="49.5" cy="18.0" r="1.4" fill="none" stroke="#6a9fe0" stroke-width="1"/><circle cx="52.5" cy="18.0" r="1.4" fill="none" stroke="#6a9fe0" stroke-width="1"/><circle cx="47.7" cy="21.0" r="1.4" fill="none" stroke="#6a9fe0" stroke-width="1"/><circle cx="51.3" cy="21.0" r="1.4" fill="none" stroke="#6a9fe0" stroke-width="1"/><circle cx="47.7" cy="25.5" r="1.4" fill="none" stroke="#6a9fe0" stroke-width="1"/><circle cx="51.3" cy="25.5" r="1.4" fill="none" stroke="#6a9fe0" stroke-width="1"/><circle cx="47.7" cy="25.0" r="1.4" fill="none" stroke="#6a9fe0" stroke-width="1"/><circle cx="51.3" cy="25.0" r="1.4" fill="none" stroke="#6a9fe0" stroke-width="1"/><circle cx="46.5" cy="28.0" r="1.4" fill="none" stroke="#6a9fe0" stroke-width="1"/><circle cx="49.5" cy="28.0" r="1.4" fill="none" stroke="#6a9fe0" stroke-width="1"/><circle cx="52.5" cy="28.0" r="1.4" fill="none" stroke="#6a9fe0" stroke-width="1"/><path d="M45 23.0h9M49.5 15.5v15.0" stroke="#6a9fe0" stroke-width="1"/><rect x="48.0" y="18.5" width="3" height="9.0" fill="#6a9fe0" opacity="0.7"/></svg>
<div class="t" style="left:396px;top:193px;width:67px;text-align:center;color:#000">Wymienni...</div>
<div class="a" style="left:468px;top:144px;width:67px;height:63px;background:#0078d7"></div>
<div class="a" style="left:472px;top:147px;width:60px;height:46px;background:#fff"></div>
<svg class="a" style="left:472px;top:148px" width="58" height="43"><rect x="0" y="0" width="58" height="43" fill="#000"/><circle cx="20.399999999999977" cy="20.400000000000006" r="16.8" fill="#e6e6e6"/><circle cx="20.399999999999977" cy="20.400000000000006" r="15.4" fill="#d9a066"/><rect x="17.8" y="6.0" width="2.2" height="2.2" fill="#6a9fe0"/><rect x="21.0" y="6.0" width="2.2" height="2.2" fill="#6a9fe0"/><rect x="13.0" y="8.8" width="2.2" height="2.2" fill="#6a9fe0"/><rect x="16.2" y="8.8" width="2.2" height="2.2" fill="#6a9fe0"/><rect x="19.4" y="8.8" width="2.2" height="2.2" fill="#6a9fe0"/><rect x="22.6" y="8.8" width="2.2" height="2.2" fill="#6a9fe0"/><rect x="25.8" y="8.8" width="2.2" height="2.2" fill="#6a9fe0"/><rect x="8.2" y="11.6" width="2.2" height="2.2" fill="#6a9fe0"/><rect x="11.4" y="11.6" width="2.2" height="2.2" fill="#6a9fe0"/><rect x="14.6" y="11.6" width="2.2" height="2.2" fill="#6a9fe0"/><rect x="17.8" y="11.6" width="2.2" height="2.2" fill="#6a9fe0"/><rect x="21.0" y="11.6" width="2.2" height="2.2" fill="#6a9fe0"/><rect x="24.2" y="11.6" width="2.2" height="2.2" fill="#6a9fe0"/><rect x="27.4" y="11.6" width="2.2" height="2.2" fill="#6a9fe0"/><rect x="30.6" y="11.6" width="2.2" height="2.2" fill="#6a9fe0"/><rect x="6.6" y="14.4" width="2.2" height="2.2" fill="#6a9fe0"/><rect x="9.8" y="14.4" width="2.2" height="2.2" fill="#6a9fe0"/><rect x="13.0" y="14.4" width="2.2" height="2.2" fill="#6a9fe0"/><rect x="16.2" y="14.4" width="2.2" height="2.2" fill="#6a9fe0"/><rect x="19.4" y="14.4" width="2.2" height="2.2" fill="#6a9fe0"/><rect x="22.6" y="14.4" width="2.2" height="2.2" fill="#6a9fe0"/><rect x="25.8" y="14.4" width="2.2" height="2.2" fill="#6a9fe0"/><rect x="29.0" y="14.4" width="2.2" height="2.2" fill="#6a9fe0"/><rect x="32.2" y="14.4" width="2.2" height="2.2" fill="#6a9fe0"/><rect x="8.2" y="17.2" width="2.2" height="2.2" fill="#6a9fe0"/><rect x="11.4" y="17.2" width="2.2" height="2.2" fill="#6a9fe0"/><rect x="14.6" y="17.2" width="2.2" height="2.2" fill="#6a9fe0"/><rect x="17.8" y="17.2" width="2.2" height="2.2" fill="#6a9fe0"/><rect x="21.0" y="17.2" width="2.2" height="2.2" fill="#6a9fe0"/><rect x="24.2" y="17.2" width="2.2" height="2.2" fill="#6a9fe0"/><rect x="27.4" y="17.2" width="2.2" height="2.2" fill="#6a9fe0"/><rect x="30.6" y="17.2" width="2.2" height="2.2" fill="#6a9fe0"/><rect x="6.6" y="20.0" width="2.2" height="2.2" fill="#6a9fe0"/><rect x="9.8" y="20.0" width="2.2" height="2.2" fill="#6a9fe0"/><rect x="13.0" y="20.0" width="2.2" height="2.2" fill="#6a9fe0"/><rect x="16.2" y="20.0" width="2.2" height="2.2" fill="#6a9fe0"/><rect x="19.4" y="20.0" width="2.2" height="2.2" fill="#6a9fe0"/><rect x="22.6" y="20.0" width="2.2" height="2.2" fill="#6a9fe0"/><rect x="25.8" y="20.0" width="2.2" height="2.2" fill="#6a9fe0"/><rect x="29.0" y="20.0" width="2.2" height="2.2" fill="#6a9fe0"/><rect x="32.2" y="20.0" width="2.2" height="2.2" fill="#6a9fe0"/><rect x="8.2" y="22.8" width="2.2" height="2.2" fill="#6a9fe0"/><rect x="11.4" y="22.8" width="2.2" height="2.2" fill="#6a9fe0"/><rect x="14.6" y="22.8" width="2.2" height="2.2" fill="#6a9fe0"/><rect x="17.8" y="22.8" width="2.2" height="2.2" fill="#6a9fe0"/><rect x="21.0" y="22.8" width="2.2" height="2.2" fill="#6a9fe0"/><rect x="24.2" y="22.8" width="2.2" height="2.2" fill="#6a9fe0"/><rect x="27.4" y="22.8" width="2.2" height="2.2" fill="#6a9fe0"/><rect x="30.6" y="22.8" width="2.2" height="2.2" fill="#6a9fe0"/><rect x="9.8" y="25.6" width="2.2" height="2.2" fill="#6a9fe0"/><rect x="13.0" y="25.6" width="2.2" height="2.2" fill="#6a9fe0"/><rect x="16.2" y="25.6" width="2.2" height="2.2" fill="#6a9fe0"/><rect x="19.4" y="25.6" width="2.2" height="2.2" fill="#6a9fe0"/><rect x="22.6" y="25.6" width="2.2" height="2.2" fill="#6a9fe0"/><rect x="25.8" y="25.6" width="2.2" height="2.2" fill="#6a9fe0"/><rect x="29.0" y="25.6" width="2.2" height="2.2" fill="#6a9fe0"/><rect x="11.4" y="28.4" width="2.2" height="2.2" fill="#6a9fe0"/><rect x="14.6" y="28.4" width="2.2" height="2.2" fill="#6a9fe0"/><rect x="17.8" y="28.4" width="2.2" height="2.2" fill="#6a9fe0"/><rect x="21.0" y="28.4" width="2.2" height="2.2" fill="#6a9fe0"/><rect x="24.2" y="28.4" width="2.2" height="2.2" fill="#6a9fe0"/><rect x="27.4" y="28.4" width="2.2" height="2.2" fill="#6a9fe0"/><rect x="13.0" y="31.2" width="2.2" height="2.2" fill="#6a9fe0"/><rect x="16.2" y="31.2" width="2.2" height="2.2" fill="#6a9fe0"/><rect x="19.4" y="31.2" width="2.2" height="2.2" fill="#6a9fe0"/><rect x="22.6" y="31.2" width="2.2" height="2.2" fill="#6a9fe0"/><rect x="25.8" y="31.2" width="2.2" height="2.2" fill="#6a9fe0"/><path d="M2.5999999999999766 20.400000000000006h35.6M20.399999999999977 2.600000000000005v35.6" stroke="#6a9fe0" stroke-width="1.2"/><circle cx="47.5" cy="16.5" r="1.4" fill="none" stroke="#6a9fe0" stroke-width="1"/><circle cx="50.5" cy="16.5" r="1.4" fill="none" stroke="#6a9fe0" stroke-width="1"/><circle cx="53.5" cy="16.5" r="1.4" fill="none" stroke="#6a9fe0" stroke-width="1"/><circle cx="48.7" cy="19.5" r="1.4" fill="none" stroke="#6a9fe0" stroke-width="1"/><circle cx="52.3" cy="19.5" r="1.4" fill="none" stroke="#6a9fe0" stroke-width="1"/><circle cx="48.7" cy="24.5" r="1.4" fill="none" stroke="#6a9fe0" stroke-width="1"/><circle cx="52.3" cy="24.5" r="1.4" fill="none" stroke="#6a9fe0" stroke-width="1"/><circle cx="48.7" cy="24.5" r="1.4" fill="none" stroke="#6a9fe0" stroke-width="1"/><circle cx="52.3" cy="24.5" r="1.4" fill="none" stroke="#6a9fe0" stroke-width="1"/><circle cx="47.5" cy="27.5" r="1.4" fill="none" stroke="#6a9fe0" stroke-width="1"/><circle cx="50.5" cy="27.5" r="1.4" fill="none" stroke="#6a9fe0" stroke-width="1"/><circle cx="53.5" cy="27.5" r="1.4" fill="none" stroke="#6a9fe0" stroke-width="1"/><path d="M46 22.0h9M50.5 14v16" stroke="#6a9fe0" stroke-width="1"/><rect x="49.0" y="17" width="3" height="10" fill="#6a9fe0" opacity="0.7"/></svg>
<div class="t" style="left:467px;top:193px;width:67px;text-align:center;color:#fff">Wymienni...</div>
<div class="a" style="left:322px;top:293px;width:606px;height:170px;background:#fff;border:2px solid #696969;border-right:1px solid #e3e3e3;border-bottom:1px solid #e3e3e3;box-shadow:inset 0 0 0 0 #fff"></div>
<div class="t" style="left:330px;top:299px;font-size:12px;line-height:14px;letter-spacing:0;-webkit-text-stroke:0">Nazwa</div>
<div class="a" style="left:559px;top:296px;width:18px;height:19px;background:#f0f0f0;border-right:1px solid #a0a0a0;border-bottom:1px solid #a0a0a0"></div>
<svg class="a" style="left:563px;top:304px" width="9" height="5"><path d="M0 0h8l-4 4.5z" fill="#555"/></svg>
<div class="a" style="left:581px;top:294px;width:1px;height:23px;background:#e5e5e5"></div>
<div class="t" style="left:588px;top:299px;font-size:12px;line-height:14px;letter-spacing:0;-webkit-text-stroke:0">D</div>
<div class="a" style="left:624px;top:296px;width:18px;height:19px;background:#f0f0f0;border-right:1px solid #a0a0a0;border-bottom:1px solid #a0a0a0"></div>
<svg class="a" style="left:628px;top:304px" width="9" height="5"><path d="M0 0h8l-4 4.5z" fill="#555"/></svg>
<div class="a" style="left:646px;top:294px;width:1px;height:23px;background:#e5e5e5"></div>
<div class="t" style="left:653px;top:299px;font-size:12px;line-height:14px;letter-spacing:0;-webkit-text-stroke:0">D1</div>
<div class="a" style="left:689px;top:296px;width:18px;height:19px;background:#f0f0f0;border-right:1px solid #a0a0a0;border-bottom:1px solid #a0a0a0"></div>
<svg class="a" style="left:693px;top:304px" width="9" height="5"><path d="M0 0h8l-4 4.5z" fill="#555"/></svg>
<div class="a" style="left:711px;top:294px;width:1px;height:23px;background:#e5e5e5"></div>
<div class="t" style="left:718px;top:299px;font-size:12px;line-height:14px;letter-spacing:0;-webkit-text-stroke:0">A</div>
<div class="a" style="left:754px;top:296px;width:18px;height:19px;background:#f0f0f0;border-right:1px solid #a0a0a0;border-bottom:1px solid #a0a0a0"></div>
<svg class="a" style="left:758px;top:304px" width="9" height="5"><path d="M0 0h8l-4 4.5z" fill="#555"/></svg>
<div class="a" style="left:776px;top:294px;width:1px;height:23px;background:#e5e5e5"></div>
<div class="t" style="left:783px;top:299px;font-size:12px;line-height:14px;letter-spacing:0;-webkit-text-stroke:0">B</div>
<div class="a" style="left:819px;top:296px;width:18px;height:19px;background:#f0f0f0;border-right:1px solid #a0a0a0;border-bottom:1px solid #a0a0a0"></div>
<svg class="a" style="left:823px;top:304px" width="9" height="5"><path d="M0 0h8l-4 4.5z" fill="#555"/></svg>
<div class="a" style="left:841px;top:294px;width:1px;height:23px;background:#e5e5e5"></div>
<div class="t" style="left:848px;top:299px;font-size:12px;line-height:14px;letter-spacing:0;-webkit-text-stroke:0">S</div>
<div class="a" style="left:884px;top:296px;width:18px;height:19px;background:#f0f0f0;border-right:1px solid #a0a0a0;border-bottom:1px solid #a0a0a0"></div>
<svg class="a" style="left:888px;top:304px" width="9" height="5"><path d="M0 0h8l-4 4.5z" fill="#555"/></svg>
<div class="a" style="left:906px;top:294px;width:1px;height:23px;background:#e5e5e5"></div>
<div class="box" style="left:331px;top:324px"></div>
<div class="a" style="left:340px;top:328px;width:6px;height:1px;background-image:linear-gradient(90deg,#808080 50%,transparent 50%);background-size:2px 1px"></div>
<svg class="a" style="left:346px;top:321px" width="16" height="13"><defs><linearGradient id="fg" x1="0" y1="0" x2="1" y2="1"><stop offset="0" stop-color="#fff6b4"/><stop offset="0.5" stop-color="#f8d45c"/><stop offset="1" stop-color="#dc960c"/></linearGradient></defs><path d="M0.5 3 V1 Q0.5 0.5 1 0.5 H6 L7 1.5 V3" fill="#fff0a0" stroke="#a89468" stroke-width="1"/><rect x="0.5" y="2.5" width="14" height="9" fill="url(#fg)" stroke="#a89468" stroke-width="1"/><path d="M1 11.5 H14.5 V3" fill="none" stroke="#2e2008" stroke-width="1"/></svg>
<div class="t" style="left:367px;top:320px;font-size:12px;line-height:14px;letter-spacing:0;-webkit-text-stroke:0">Rozkład wg normy</div>
<div class="a" style="left:335px;top:333px;width:1px;height:111px;background-image:linear-gradient(#808080 50%,transparent 50%);background-size:1px 2px"></div>
<div class="a" style="left:354px;top:334px;width:1px;height:110px;background-image:linear-gradient(#808080 50%,transparent 50%);background-size:1px 2px"></div>
<div class="a" style="left:384px;top:336px;width:526px;height:18px;background:#efefef"></div>
<div class="a" style="left:355px;top:346px;width:10px;height:1px;background-image:linear-gradient(90deg,#808080 50%,transparent 50%);background-size:2px 1px"></div>
<div class="doc" style="left:367px;top:338px"></div>
<div class="t" style="left:386px;top:338px;font-size:12px;line-height:14px;letter-spacing:0;-webkit-text-stroke:0">Wymiennik DN150</div>
<div class="t" style="left:580px;top:338px;width:60px;text-align:right;font-size:12px;line-height:14px;letter-spacing:-0.6px;-webkit-text-stroke:0">168.0</div>
<div class="t" style="left:645px;top:338px;width:60px;text-align:right;font-size:12px;line-height:14px;letter-spacing:-0.6px;-webkit-text-stroke:0">25.0</div>
<div class="t" style="left:710px;top:338px;width:60px;text-align:right;font-size:12px;line-height:14px;letter-spacing:-0.6px;-webkit-text-stroke:0">32.0</div>
<div class="t" style="left:775px;top:338px;width:60px;text-align:right;font-size:12px;line-height:14px;letter-spacing:-0.6px;-webkit-text-stroke:0">44.0</div>
<div class="t" style="left:840px;top:338px;width:60px;text-align:right;font-size:12px;line-height:14px;letter-spacing:-0.6px;-webkit-text-stroke:0">4.5</div>
<div class="a" style="left:355px;top:364px;width:10px;height:1px;background-image:linear-gradient(90deg,#808080 50%,transparent 50%);background-size:2px 1px"></div>
<div class="doc" style="left:367px;top:356px"></div>
<div class="t" style="left:386px;top:356px;font-size:12px;line-height:14px;letter-spacing:0;-webkit-text-stroke:0">Wymiennik DN200</div>
<div class="t" style="left:580px;top:356px;width:60px;text-align:right;font-size:12px;line-height:14px;letter-spacing:-0.6px;-webkit-text-stroke:0">219.0</div>
<div class="t" style="left:645px;top:356px;width:60px;text-align:right;font-size:12px;line-height:14px;letter-spacing:-0.6px;-webkit-text-stroke:0">25.0</div>
<div class="t" style="left:710px;top:356px;width:60px;text-align:right;font-size:12px;line-height:14px;letter-spacing:-0.6px;-webkit-text-stroke:0">32.0</div>
<div class="t" style="left:775px;top:356px;width:60px;text-align:right;font-size:12px;line-height:14px;letter-spacing:-0.6px;-webkit-text-stroke:0">44.0</div>
<div class="t" style="left:840px;top:356px;width:60px;text-align:right;font-size:12px;line-height:14px;letter-spacing:-0.6px;-webkit-text-stroke:0">5.9</div>
<div class="a" style="left:355px;top:382px;width:10px;height:1px;background-image:linear-gradient(90deg,#808080 50%,transparent 50%);background-size:2px 1px"></div>
<div class="doc" style="left:367px;top:374px"></div>
<div class="t" style="left:386px;top:374px;font-size:12px;line-height:14px;letter-spacing:0;-webkit-text-stroke:0">Wymiennik DN250</div>
<div class="t" style="left:580px;top:374px;width:60px;text-align:right;font-size:12px;line-height:14px;letter-spacing:-0.6px;-webkit-text-stroke:0">273.0</div>
<div class="t" style="left:645px;top:374px;width:60px;text-align:right;font-size:12px;line-height:14px;letter-spacing:-0.6px;-webkit-text-stroke:0">25.0</div>
<div class="t" style="left:710px;top:374px;width:60px;text-align:right;font-size:12px;line-height:14px;letter-spacing:-0.6px;-webkit-text-stroke:0">32.0</div>
<div class="t" style="left:775px;top:374px;width:60px;text-align:right;font-size:12px;line-height:14px;letter-spacing:-0.6px;-webkit-text-stroke:0">44.0</div>
<div class="t" style="left:840px;top:374px;width:60px;text-align:right;font-size:12px;line-height:14px;letter-spacing:-0.6px;-webkit-text-stroke:0">6.3</div>
<div class="a" style="left:355px;top:400px;width:10px;height:1px;background-image:linear-gradient(90deg,#808080 50%,transparent 50%);background-size:2px 1px"></div>
<div class="doc" style="left:367px;top:392px"></div>
<div class="t" style="left:386px;top:392px;font-size:12px;line-height:14px;letter-spacing:0;-webkit-text-stroke:0">Wymiennik DN300</div>
<div class="t" style="left:580px;top:392px;width:60px;text-align:right;font-size:12px;line-height:14px;letter-spacing:-0.6px;-webkit-text-stroke:0">324.0</div>
<div class="t" style="left:645px;top:392px;width:60px;text-align:right;font-size:12px;line-height:14px;letter-spacing:-0.6px;-webkit-text-stroke:0">25.0</div>
<div class="t" style="left:710px;top:392px;width:60px;text-align:right;font-size:12px;line-height:14px;letter-spacing:-0.6px;-webkit-text-stroke:0">32.0</div>
<div class="t" style="left:775px;top:392px;width:60px;text-align:right;font-size:12px;line-height:14px;letter-spacing:-0.6px;-webkit-text-stroke:0">44.0</div>
<div class="t" style="left:840px;top:392px;width:60px;text-align:right;font-size:12px;line-height:14px;letter-spacing:-0.6px;-webkit-text-stroke:0">7.1</div>
<div class="a" style="left:355px;top:418px;width:10px;height:1px;background-image:linear-gradient(90deg,#808080 50%,transparent 50%);background-size:2px 1px"></div>
<div class="doc" style="left:367px;top:410px"></div>
<div class="t" style="left:386px;top:410px;font-size:12px;line-height:14px;letter-spacing:0;-webkit-text-stroke:0">Wymiennik DN350</div>
<div class="t" style="left:580px;top:410px;width:60px;text-align:right;font-size:12px;line-height:14px;letter-spacing:-0.6px;-webkit-text-stroke:0">355.0</div>
<div class="t" style="left:645px;top:410px;width:60px;text-align:right;font-size:12px;line-height:14px;letter-spacing:-0.6px;-webkit-text-stroke:0">25.0</div>
<div class="t" style="left:710px;top:410px;width:60px;text-align:right;font-size:12px;line-height:14px;letter-spacing:-0.6px;-webkit-text-stroke:0">32.0</div>
<div class="t" style="left:775px;top:410px;width:60px;text-align:right;font-size:12px;line-height:14px;letter-spacing:-0.6px;-webkit-text-stroke:0">44.0</div>
<div class="t" style="left:840px;top:410px;width:60px;text-align:right;font-size:12px;line-height:14px;letter-spacing:-0.6px;-webkit-text-stroke:0">8.0</div>
<div class="a" style="left:355px;top:436px;width:10px;height:1px;background-image:linear-gradient(90deg,#808080 50%,transparent 50%);background-size:2px 1px"></div>
<div class="doc" style="left:367px;top:428px"></div>
<div class="t" style="left:386px;top:428px;font-size:12px;line-height:14px;letter-spacing:0;-webkit-text-stroke:0">Wymiennik DN400</div>
<div class="t" style="left:580px;top:428px;width:60px;text-align:right;font-size:12px;line-height:14px;letter-spacing:-0.6px;-webkit-text-stroke:0">406.0</div>
<div class="t" style="left:645px;top:428px;width:60px;text-align:right;font-size:12px;line-height:14px;letter-spacing:-0.6px;-webkit-text-stroke:0">25.0</div>
<div class="t" style="left:710px;top:428px;width:60px;text-align:right;font-size:12px;line-height:14px;letter-spacing:-0.6px;-webkit-text-stroke:0">32.0</div>
<div class="t" style="left:775px;top:428px;width:60px;text-align:right;font-size:12px;line-height:14px;letter-spacing:-0.6px;-webkit-text-stroke:0">44.0</div>
<div class="t" style="left:840px;top:428px;width:60px;text-align:right;font-size:12px;line-height:14px;letter-spacing:-0.6px;-webkit-text-stroke:0">8.8</div>
<div class="a" style="left:911px;top:318px;width:16px;height:127px;background:#f0f0f0"></div>
<div class="a" style="left:912px;top:336px;width:14px;height:33px;background:#cdcdcd"></div>
<svg class="a" style="left:914px;top:323px" width="10" height="8"><path d="M1 6 L5 2 L9 6" fill="none" stroke="#606060" stroke-width="2"/></svg>
<svg class="a" style="left:914px;top:432px" width="10" height="8"><path d="M1 2 L5 6 L9 2" fill="none" stroke="#606060" stroke-width="2"/></svg>
<div class="a" style="left:324px;top:445px;width:603px;height:17px;background:#f0f0f0"></div>
<div class="a" style="left:341px;top:446px;width:455px;height:15px;background:#cdcdcd"></div>
<svg class="a" style="left:328px;top:448px" width="10" height="10"><path d="M6.5 1.5 L3 5 L6.5 8.5" fill="none" stroke="#606060" stroke-width="2"/></svg>
<svg class="a" style="left:897px;top:448px" width="10" height="10"><path d="M3.5 1.5 L7 5 L3.5 8.5" fill="none" stroke="#606060" stroke-width="2"/></svg>
<div class="cb" style="left:12px;top:475px"></div>
<div class="t" style="left:28px;top:476px;">Sortuj</div>
<div class="cb" style="left:102px;top:475px"></div>
<div class="t" style="left:118px;top:476px;">Normy</div>
<div class="a" style="left:321px;top:477px;width:280px;height:221px;border:1px solid #dcdcdc"></div>
<div class="a" style="left:328px;top:470px;width:124px;height:13px;background:#f0f0f0"></div>
<div class="t" style="left:330px;top:471px;">Widok i punkt wstawienia</div>
<div class="t" style="left:350px;top:503px;">Punkt wstawienia</div>
<div class="a" style="left:448px;top:499px;width:103px;height:21px;background:#cccccc;border:1px solid #bfbfbf"></div>
<div class="t" style="left:451px;top:504px;color:#838383">Punkt bazowy</div>
<svg class="a" style="left:537px;top:507px" width="10" height="6"><path d="M0.5 0.5 L4.5 4.5 L8.5 0.5" fill="none" stroke="#9a9a9a" stroke-width="1"/></svg>
<svg class="a" style="left:351px;top:535px" width="13" height="13"><circle cx="6.5" cy="6.5" r="6" fill="#fff" stroke="#333"/><circle cx="6.5" cy="6.5" r="3.5" fill="#333"/></svg>
<div class="t" style="left:367px;top:536px;">2D</div>
<div class="a" style="left:607px;top:477px;width:322px;height:221px;border:1px solid #dcdcdc"></div>
<div class="a" style="left:613px;top:470px;width:54px;height:13px;background:#f0f0f0"></div>
<div class="t" style="left:615px;top:471px;">Parametry</div>
<div class="cb" style="left:618px;top:498px;border-color:#cccccc"></div>
<div class="t" style="left:634px;top:499px;color:#838383">System</div>
<div class="a" style="left:739px;top:496px;width:179px;height:21px;background:#cccccc;border:1px solid #bfbfbf"></div>
<div class="t" style="left:743px;top:500px;color:#838383">--</div>
<div class="a" style="left:901px;top:498px;width:15px;height:16px;background:#fff;padding:1px"><div style="width:13px;height:14px;background:linear-gradient(#d6e2fb,#b3c9f5);border-radius:2px"></div></div>
<svg class="a" style="left:903px;top:502px" width="12" height="9"><path d="M1.5 2 L5.5 6 L9.5 2" fill="none" stroke="#44546a" stroke-width="2"/></svg>
<div class="t" style="left:619px;top:594px;">Typ</div>
<div class="tb" style="left:741px;top:590px;width:176px;height:22px"></div>
<div class="t" style="left:619px;top:620px;">Typoszereg</div>
<div class="tb" style="left:741px;top:616px;width:176px;height:22px"></div>
<div class="t" style="left:619px;top:645px;">Producent</div>
<div class="tb" style="left:741px;top:642px;width:176px;height:22px"></div>
<div class="t" style="left:619px;top:671px;">Nr katalogowy</div>
<div class="tb" style="left:741px;top:667px;width:176px;height:22px"></div>
<div class="t" style="left:747px;top:594px;letter-spacing:-0.4px">Wymiennik DN150</div>
<div class="t" style="left:350px;top:728px;">Aktualna jednostka: milimetry</div>
<div class="a" style="left:576px;top:724px;width:140px;height:31px;background:#f0f0f0;border:1px solid #fff;border-right-color:#a0a0a0;border-bottom-color:#a0a0a0"></div>
<svg class="a" style="left:583px;top:731px" width="17" height="16"><rect x="0.5" y="4.5" width="11.5" height="10.5" fill="#fff" stroke="#333"/><path d="M2 10.5h1.5M5 10.5h4.5M2 12.5h1.5M5 12.5h4.5" stroke="#333"/><path d="M1.5 6.5 L6.5 1.5 L10 5 L6 9.5Z" fill="#777" opacity="0.55"/><path d="M7 0.5h6l1.5 3l-1.5 3h-3z" fill="#d4d4d4" stroke="#333" stroke-width="0.9"/><rect x="14" y="0.5" width="2.2" height="6.5" fill="#3232b4"/></svg>
<div class="t" style="left:630px;top:733px;">Styl obiektu</div>
<div class="cb" style="left:748px;top:704px"></div>
<div class="t" style="left:764px;top:704px;">Powtarzaj polecenie</div>
<div class="a" style="left:751px;top:723px;width:146px;height:33px;background:#f0f0f0;border:1px solid #000"></div>
<div class="a" style="left:752px;top:724px;width:144px;height:31px;border:1px solid #fff;border-right-color:#a0a0a0;border-bottom-color:#a0a0a0"></div>
<svg class="a" style="left:761px;top:730px" width="19" height="22"><path d="M3.5 11.5 L6.5 19 L15 3.5" fill="none" stroke="#000" stroke-width="4.6" stroke-linejoin="round" stroke-linecap="round"/><path d="M3.5 11.5 L6.5 19 L15 3.5" fill="none" stroke="#008a00" stroke-width="2.6" stroke-linejoin="round"/><path d="M2.6 11 L4.6 10.6" stroke="#b8b0b8" stroke-width="1.6"/><path d="M14 3.6 L15.8 4.4" stroke="#b8b0b8" stroke-width="1.6"/></svg>
<svg class="a" style="left:828px;top:733px" width="18" height="13"><rect x="2.6" y="2.6" width="5" height="7.8" rx="1.2" fill="none" stroke="#000" stroke-width="1.2"/><path d="M10.6 2V11.2M10.8 6.6L15 2.3M11 6.2L15.6 11" fill="none" stroke="#000" stroke-width="1.2"/></svg>
<div class="a" style="left:899px;top:723px;width:31px;height:33px;background:#f0f0f0;border:1px solid #fff;border-right-color:#a0a0a0;border-bottom-color:#a0a0a0"></div>
<div class="a" style="left:912px;top:732px;width:3px;height:3px;background:#000"></div>
<div class="a" style="left:912px;top:738px;width:3px;height:3px;background:#000"></div>
<div class="a" style="left:912px;top:744px;width:3px;height:3px;background:#000"></div>
<svg class="a" style="left:927px;top:759px" width="9" height="9"><rect x="6" y="0" width="2" height="2" fill="#b4b4b4"/><rect x="3" y="3" width="2" height="2" fill="#b4b4b4"/><rect x="6" y="3" width="2" height="2" fill="#b4b4b4"/><rect x="0" y="6" width="2" height="2" fill="#b4b4b4"/><rect x="3" y="6" width="2" height="2" fill="#b4b4b4"/><rect x="6" y="6" width="2" height="2" fill="#b4b4b4"/></svg>
<div class="a" style="left:11px;top:495px;width:304px;height:257px;background:#000"></div>
<svg class="a" style="left:11px;top:495px" width="304" height="257"><g transform="translate(-11,-495)"><circle cx="114.4" cy="619.0" r="85.3" fill="none" stroke="#ffffff" stroke-width="1"/><defs><pattern id="hatch" patternUnits="userSpaceOnUse" width="3.6" height="3.6"><path d="M-1 1L1 -1M0 3.6L3.6 0M2.6 4.6L4.6 2.6" stroke="#ff0000" stroke-width="1.0"/></pattern></defs><path fill-rule="evenodd" fill="url(#hatch)" d="M29.60000000000001 619.0a84.8 84.8 0 1 0 169.6 0a84.8 84.8 0 1 0 -169.6 0ZM32.7 619.0a81.7 81.7 0 1 0 163.4 0a81.7 81.7 0 1 0 -163.4 0Z"/><circle cx="114.4" cy="619.0" r="81.2" fill="none" stroke="#ffffff" stroke-width="1"/><circle cx="114.4" cy="619.0" r="78.6" fill="none" stroke="#dca46a" stroke-width="1"/><path d="M24 619.5H204" stroke="#6aa3e4" stroke-width="1" stroke-dasharray="13 5 1 5"/><path d="M114.5 528V711" stroke="#6aa3e4" stroke-width="1" stroke-dasharray="13 5 1 5"/><rect x="114" y="619" width="1" height="1" fill="#fff"/><circle cx="103.5" cy="547.7" r="6" fill="none" stroke="#dca46a" stroke-width="1"/><path d="M100.1 540.9L106.9 554.5M106.9 540.9L100.1 554.5" stroke="#6aa3e4" stroke-width="1"/><circle cx="124.8" cy="547.7" r="6" fill="none" stroke="#dca46a" stroke-width="1"/><path d="M121.4 540.9L128.2 554.5M128.2 540.9L121.4 554.5" stroke="#6aa3e4" stroke-width="1"/><circle cx="96.3" cy="560.4" r="6" fill="none" stroke="#dca46a" stroke-width="1"/><path d="M92.9 553.6L99.7 567.2M99.7 553.6L92.9 567.2" stroke="#6aa3e4" stroke-width="1"/><circle cx="80.8" cy="560.4" r="6" fill="none" stroke="#dca46a" stroke-width="1"/><path d="M77.4 553.6L84.2 567.2M84.2 553.6L77.4 567.2" stroke="#6aa3e4" stroke-width="1"/><circle cx="132.8" cy="560.4" r="6" fill="none" stroke="#dca46a" stroke-width="1"/><path d="M129.4 553.6L136.2 567.2M136.2 553.6L129.4 567.2" stroke="#6aa3e4" stroke-width="1"/><circle cx="148.0" cy="560.4" r="6" fill="none" stroke="#dca46a" stroke-width="1"/><path d="M144.6 553.6L151.4 567.2M151.4 553.6L144.6 567.2" stroke="#6aa3e4" stroke-width="1"/><circle cx="103.5" cy="574.2" r="6" fill="none" stroke="#dca46a" stroke-width="1"/><path d="M100.1 567.4L106.9 581.0M106.9 567.4L100.1 581.0" stroke="#6aa3e4" stroke-width="1"/><circle cx="88.3" cy="574.2" r="6" fill="none" stroke="#dca46a" stroke-width="1"/><path d="M84.9 567.4L91.7 581.0M91.7 567.4L84.9 581.0" stroke="#6aa3e4" stroke-width="1"/><circle cx="73.3" cy="574.2" r="6" fill="none" stroke="#dca46a" stroke-width="1"/><path d="M69.9 567.4L76.7 581.0M76.7 567.4L69.9 581.0" stroke="#6aa3e4" stroke-width="1"/><circle cx="57.6" cy="574.2" r="6" fill="none" stroke="#dca46a" stroke-width="1"/><path d="M54.2 567.4L61.0 581.0M61.0 567.4L54.2 581.0" stroke="#6aa3e4" stroke-width="1"/><circle cx="124.8" cy="574.2" r="6" fill="none" stroke="#dca46a" stroke-width="1"/><path d="M121.4 567.4L128.2 581.0M128.2 567.4L121.4 581.0" stroke="#6aa3e4" stroke-width="1"/><circle cx="140.0" cy="574.2" r="6" fill="none" stroke="#dca46a" stroke-width="1"/><path d="M136.6 567.4L143.4 581.0M143.4 567.4L136.6 581.0" stroke="#6aa3e4" stroke-width="1"/><circle cx="155.2" cy="574.2" r="6" fill="none" stroke="#dca46a" stroke-width="1"/><path d="M151.8 567.4L158.6 581.0M158.6 567.4L151.8 581.0" stroke="#6aa3e4" stroke-width="1"/><circle cx="170.4" cy="574.2" r="6" fill="none" stroke="#dca46a" stroke-width="1"/><path d="M167.0 567.4L173.8 581.0M173.8 567.4L167.0 581.0" stroke="#6aa3e4" stroke-width="1"/><circle cx="103.5" cy="595.1" r="6" fill="none" stroke="#dca46a" stroke-width="1"/><path d="M100.1 588.3L106.9 601.9M106.9 588.3L100.1 601.9" stroke="#6aa3e4" stroke-width="1"/><circle cx="88.3" cy="595.1" r="6" fill="none" stroke="#dca46a" stroke-width="1"/><path d="M84.9 588.3L91.7 601.9M91.7 588.3L84.9 601.9" stroke="#6aa3e4" stroke-width="1"/><circle cx="73.3" cy="595.1" r="6" fill="none" stroke="#dca46a" stroke-width="1"/><path d="M69.9 588.3L76.7 601.9M76.7 588.3L69.9 601.9" stroke="#6aa3e4" stroke-width="1"/><circle cx="57.6" cy="595.1" r="6" fill="none" stroke="#dca46a" stroke-width="1"/><path d="M54.2 588.3L61.0 601.9M61.0 588.3L54.2 601.9" stroke="#6aa3e4" stroke-width="1"/><circle cx="124.8" cy="595.1" r="6" fill="none" stroke="#dca46a" stroke-width="1"/><path d="M121.4 588.3L128.2 601.9M128.2 588.3L121.4 601.9" stroke="#6aa3e4" stroke-width="1"/><circle cx="140.0" cy="595.1" r="6" fill="none" stroke="#dca46a" stroke-width="1"/><path d="M136.6 588.3L143.4 601.9M143.4 588.3L136.6 601.9" stroke="#6aa3e4" stroke-width="1"/><circle cx="155.2" cy="595.1" r="6" fill="none" stroke="#dca46a" stroke-width="1"/><path d="M151.8 588.3L158.6 601.9M158.6 588.3L151.8 601.9" stroke="#6aa3e4" stroke-width="1"/><circle cx="170.4" cy="595.1" r="6" fill="none" stroke="#dca46a" stroke-width="1"/><path d="M167.0 588.3L173.8 601.9M173.8 588.3L167.0 601.9" stroke="#6aa3e4" stroke-width="1"/><circle cx="96.3" cy="608.3" r="6" fill="none" stroke="#dca46a" stroke-width="1"/><path d="M92.9 601.5L99.7 615.1M99.7 601.5L92.9 615.1" stroke="#6aa3e4" stroke-width="1"/><circle cx="80.8" cy="608.3" r="6" fill="none" stroke="#dca46a" stroke-width="1"/><path d="M77.4 601.5L84.2 615.1M84.2 601.5L77.4 615.1" stroke="#6aa3e4" stroke-width="1"/><circle cx="65.3" cy="608.3" r="6" fill="none" stroke="#dca46a" stroke-width="1"/><path d="M61.9 601.5L68.7 615.1M68.7 601.5L61.9 615.1" stroke="#6aa3e4" stroke-width="1"/><circle cx="49.8" cy="608.3" r="6" fill="none" stroke="#dca46a" stroke-width="1"/><path d="M46.4 601.5L53.2 615.1M53.2 601.5L46.4 615.1" stroke="#6aa3e4" stroke-width="1"/><circle cx="132.8" cy="608.3" r="6" fill="none" stroke="#dca46a" stroke-width="1"/><path d="M129.4 601.5L136.2 615.1M136.2 601.5L129.4 615.1" stroke="#6aa3e4" stroke-width="1"/><circle cx="148.0" cy="608.3" r="6" fill="none" stroke="#dca46a" stroke-width="1"/><path d="M144.6 601.5L151.4 615.1M151.4 601.5L144.6 615.1" stroke="#6aa3e4" stroke-width="1"/><circle cx="163.5" cy="608.3" r="6" fill="none" stroke="#dca46a" stroke-width="1"/><path d="M160.1 601.5L166.9 615.1M166.9 601.5L160.1 615.1" stroke="#6aa3e4" stroke-width="1"/><circle cx="179.2" cy="608.3" r="6" fill="none" stroke="#dca46a" stroke-width="1"/><path d="M175.8 601.5L182.6 615.1M182.6 601.5L175.8 615.1" stroke="#6aa3e4" stroke-width="1"/><circle cx="96.3" cy="629.6" r="6" fill="none" stroke="#dca46a" stroke-width="1"/><path d="M92.9 622.8L99.7 636.4M99.7 622.8L92.9 636.4" stroke="#6aa3e4" stroke-width="1"/><circle cx="80.8" cy="629.6" r="6" fill="none" stroke="#dca46a" stroke-width="1"/><path d="M77.4 622.8L84.2 636.4M84.2 622.8L77.4 636.4" stroke="#6aa3e4" stroke-width="1"/><circle cx="65.3" cy="629.6" r="6" fill="none" stroke="#dca46a" stroke-width="1"/><path d="M61.9 622.8L68.7 636.4M68.7 622.8L61.9 636.4" stroke="#6aa3e4" stroke-width="1"/><circle cx="49.8" cy="629.6" r="6" fill="none" stroke="#dca46a" stroke-width="1"/><path d="M46.4 622.8L53.2 636.4M53.2 622.8L46.4 636.4" stroke="#6aa3e4" stroke-width="1"/><circle cx="132.8" cy="629.6" r="6" fill="none" stroke="#dca46a" stroke-width="1"/><path d="M129.4 622.8L136.2 636.4M136.2 622.8L129.4 636.4" stroke="#6aa3e4" stroke-width="1"/><circle cx="148.0" cy="629.6" r="6" fill="none" stroke="#dca46a" stroke-width="1"/><path d="M144.6 622.8L151.4 636.4M151.4 622.8L144.6 636.4" stroke="#6aa3e4" stroke-width="1"/><circle cx="163.5" cy="629.6" r="6" fill="none" stroke="#dca46a" stroke-width="1"/><path d="M160.1 622.8L166.9 636.4M166.9 622.8L160.1 636.4" stroke="#6aa3e4" stroke-width="1"/><circle cx="179.2" cy="629.6" r="6" fill="none" stroke="#dca46a" stroke-width="1"/><path d="M175.8 622.8L182.6 636.4M182.6 622.8L175.8 636.4" stroke="#6aa3e4" stroke-width="1"/><circle cx="103.5" cy="643.3" r="6" fill="none" stroke="#dca46a" stroke-width="1"/><path d="M100.1 636.5L106.9 650.1M106.9 636.5L100.1 650.1" stroke="#6aa3e4" stroke-width="1"/><circle cx="88.3" cy="643.3" r="6" fill="none" stroke="#dca46a" stroke-width="1"/><path d="M84.9 636.5L91.7 650.1M91.7 636.5L84.9 650.1" stroke="#6aa3e4" stroke-width="1"/><circle cx="73.3" cy="643.3" r="6" fill="none" stroke="#dca46a" stroke-width="1"/><path d="M69.9 636.5L76.7 650.1M76.7 636.5L69.9 650.1" stroke="#6aa3e4" stroke-width="1"/><circle cx="57.6" cy="643.3" r="6" fill="none" stroke="#dca46a" stroke-width="1"/><path d="M54.2 636.5L61.0 650.1M61.0 636.5L54.2 650.1" stroke="#6aa3e4" stroke-width="1"/><circle cx="124.8" cy="643.3" r="6" fill="none" stroke="#dca46a" stroke-width="1"/><path d="M121.4 636.5L128.2 650.1M128.2 636.5L121.4 650.1" stroke="#6aa3e4" stroke-width="1"/><circle cx="140.0" cy="643.3" r="6" fill="none" stroke="#dca46a" stroke-width="1"/><path d="M136.6 636.5L143.4 650.1M143.4 636.5L136.6 650.1" stroke="#6aa3e4" stroke-width="1"/><circle cx="155.2" cy="643.3" r="6" fill="none" stroke="#dca46a" stroke-width="1"/><path d="M151.8 636.5L158.6 650.1M158.6 636.5L151.8 650.1" stroke="#6aa3e4" stroke-width="1"/><circle cx="170.4" cy="643.3" r="6" fill="none" stroke="#dca46a" stroke-width="1"/><path d="M167.0 636.5L173.8 650.1M173.8 636.5L167.0 650.1" stroke="#6aa3e4" stroke-width="1"/><circle cx="103.5" cy="664.0" r="6" fill="none" stroke="#dca46a" stroke-width="1"/><path d="M100.1 657.2L106.9 670.8M106.9 657.2L100.1 670.8" stroke="#6aa3e4" stroke-width="1"/><circle cx="88.3" cy="664.0" r="6" fill="none" stroke="#dca46a" stroke-width="1"/><path d="M84.9 657.2L91.7 670.8M91.7 657.2L84.9 670.8" stroke="#6aa3e4" stroke-width="1"/><circle cx="73.3" cy="664.0" r="6" fill="none" stroke="#dca46a" stroke-width="1"/><path d="M69.9 657.2L76.7 670.8M76.7 657.2L69.9 670.8" stroke="#6aa3e4" stroke-width="1"/><circle cx="57.6" cy="664.0" r="6" fill="none" stroke="#dca46a" stroke-width="1"/><path d="M54.2 657.2L61.0 670.8M61.0 657.2L54.2 670.8" stroke="#6aa3e4" stroke-width="1"/><circle cx="124.8" cy="664.0" r="6" fill="none" stroke="#dca46a" stroke-width="1"/><path d="M121.4 657.2L128.2 670.8M128.2 657.2L121.4 670.8" stroke="#6aa3e4" stroke-width="1"/><circle cx="140.0" cy="664.0" r="6" fill="none" stroke="#dca46a" stroke-width="1"/><path d="M136.6 657.2L143.4 670.8M143.4 657.2L136.6 670.8" stroke="#6aa3e4" stroke-width="1"/><circle cx="155.2" cy="664.0" r="6" fill="none" stroke="#dca46a" stroke-width="1"/><path d="M151.8 657.2L158.6 670.8M158.6 657.2L151.8 670.8" stroke="#6aa3e4" stroke-width="1"/><circle cx="170.4" cy="664.0" r="6" fill="none" stroke="#dca46a" stroke-width="1"/><path d="M167.0 657.2L173.8 670.8M173.8 657.2L167.0 670.8" stroke="#6aa3e4" stroke-width="1"/><circle cx="96.3" cy="677.3" r="6" fill="none" stroke="#dca46a" stroke-width="1"/><path d="M92.9 670.5L99.7 684.1M99.7 670.5L92.9 684.1" stroke="#6aa3e4" stroke-width="1"/><circle cx="80.8" cy="677.3" r="6" fill="none" stroke="#dca46a" stroke-width="1"/><path d="M77.4 670.5L84.2 684.1M84.2 670.5L77.4 684.1" stroke="#6aa3e4" stroke-width="1"/><circle cx="132.8" cy="677.3" r="6" fill="none" stroke="#dca46a" stroke-width="1"/><path d="M129.4 670.5L136.2 684.1M136.2 670.5L129.4 684.1" stroke="#6aa3e4" stroke-width="1"/><circle cx="148.0" cy="677.3" r="6" fill="none" stroke="#dca46a" stroke-width="1"/><path d="M144.6 670.5L151.4 684.1M151.4 670.5L144.6 684.1" stroke="#6aa3e4" stroke-width="1"/><circle cx="103.5" cy="690.2" r="6" fill="none" stroke="#dca46a" stroke-width="1"/><path d="M100.1 683.4L106.9 697.0M106.9 683.4L100.1 697.0" stroke="#6aa3e4" stroke-width="1"/><circle cx="124.8" cy="690.2" r="6" fill="none" stroke="#dca46a" stroke-width="1"/><path d="M121.4 683.4L128.2 697.0M128.2 683.4L121.4 697.0" stroke="#6aa3e4" stroke-width="1"/><path d="M30.5 585V720M199.5 616V720M30 718.5H200" fill="none" stroke="#00ff00" stroke-width="1"/><rect x="31.5" y="717.0" width="3" height="3" fill="#00ff00"/><rect x="195.5" y="717.0" width="3" height="3" fill="#00ff00"/><text x="114.5" y="717" font-family="Liberation Serif" font-weight="bold" font-size="8.5" fill="#00ff00" text-anchor="middle">D</text><path d="M41 698.5H74M51.5 666V699M63.5 680V699" fill="none" stroke="#00ff00" stroke-width="1"/><rect x="46.0" y="697.0" width="3" height="3" fill="#00ff00"/><rect x="65.5" y="697.0" width="3" height="3" fill="#00ff00"/><text x="57.5" y="696" font-family="Liberation Serif" font-weight="bold" font-size="8.5" fill="#00ff00" text-anchor="middle">D1</text><path d="M34.5 526V566M34 537.5H92M34 540.5H90" fill="none" stroke="#00ff00" stroke-width="1"/><rect x="33.0" y="532.5" width="3" height="3" fill="#00ff00"/><rect x="33.0" y="542.5" width="3" height="3" fill="#00ff00"/><text transform="translate(33.2,558) rotate(-90)" font-family="Liberation Serif" font-weight="bold" font-size="8.5" fill="#00ff00" text-anchor="middle">DX</text><path d="M18 587.5H42M33 583V600" fill="none" stroke="#00ff00" stroke-width="1"/><rect x="23.5" y="586.0" width="3" height="3" fill="#00ff00"/><text transform="translate(33,582) rotate(-90)" font-family="Liberation Mono" font-size="8" fill="#00ff00" text-anchor="middle">S</text><path d="M147.5 561L180 542.5M157 572L187 555M180 542.5L187 555" fill="none" stroke="#00ff00" stroke-width="1"/><text transform="translate(189.5,553) rotate(-62)" font-family="Liberation Serif" font-weight="bold" font-size="10" fill="#00ff00" text-anchor="middle">a</text><path d="M171 573.5H216M171 595.5H216M179 608.5H216M179 629.5H216M214.5 573V596M214.5 608V630" fill="none" stroke="#00ff00" stroke-width="1"/><rect x="213.0" y="576.0" width="3" height="3" fill="#00ff00"/><rect x="213.0" y="590.0" width="3" height="3" fill="#00ff00"/><rect x="213.0" y="611.0" width="3" height="3" fill="#00ff00"/><rect x="213.0" y="624.0" width="3" height="3" fill="#00ff00"/><text transform="translate(214.2,585.2) rotate(-90)" font-family="Liberation Serif" font-weight="bold" font-size="8.5" fill="#00ff00" text-anchor="middle">R</text><text transform="translate(214.2,619.7) rotate(-90)" font-family="Liberation Serif" font-weight="bold" font-size="8.5" fill="#00ff00" text-anchor="middle">R</text><text x="190" y="639" font-family="Liberation Mono" font-size="8" fill="#00ff00" text-anchor="middle">1</text><text x="183" y="648" font-family="Liberation Mono" font-size="8" fill="#00ff00" text-anchor="middle">2</text><text x="179.5" y="666" font-family="Liberation Mono" font-size="8" fill="#00ff00" text-anchor="middle">3</text><text x="157.5" y="685" font-family="Liberation Mono" font-size="8" fill="#00ff00" text-anchor="middle">4</text><text x="134.5" y="696" font-family="Liberation Mono" font-size="8" fill="#00ff00" text-anchor="middle">5</text><path d="M190 652L208 678" fill="none" stroke="#00ff00" stroke-width="1"/><path d="M208.5 679L203.5 674.5L206.5 672.5Z" fill="#00ff00"/><text x="206" y="688" font-family="Liberation Mono" font-size="12" fill="#00ff00" letter-spacing="-0.5">BR=2</text><path d="M227.5 554.5H306.5V664.5H227.5ZM227.5 572.5H306.5M227.5 591.5H306.5M227.5 628.5H306.5" fill="none" stroke="#00ff00" stroke-width="1"/><text x="232" y="568" font-family="Liberation Sans" font-size="12.3" fill="#00ff00" textLength="72" lengthAdjust="spacing">TYPE  V=0…4</text><text x="233.5" y="584.5" font-family="Liberation Sans" font-size="8.5" fill="#00ff00" textLength="62" lengthAdjust="spacing">&amp;V=0 - optinal</text><text x="233.5" y="612.5" font-family="Liberation Sans" font-size="8.5" fill="#00ff00" textLength="20" lengthAdjust="spacingAndGlyphs">&amp;V=1</text><text x="233.5" y="644.5" font-family="Liberation Sans" font-size="8.5" fill="#00ff00" textLength="21" lengthAdjust="spacingAndGlyphs">&amp;V=2</text><circle cx="261" cy="600.6" r="5.9" fill="none" stroke="#dca46a" stroke-width="1"/><path d="M257.5 594.6L264.5 606.6M264.5 594.6L257.5 606.6" stroke="#6aa3e4" stroke-width="1"/><circle cx="276.2" cy="600.6" r="5.9" fill="none" stroke="#dca46a" stroke-width="1"/><path d="M272.7 594.6L279.7 606.6M279.7 594.6L272.7 606.6" stroke="#6aa3e4" stroke-width="1"/><circle cx="291.8" cy="600.6" r="5.9" fill="none" stroke="#dca46a" stroke-width="1"/><path d="M288.3 594.6L295.3 606.6M295.3 594.6L288.3 606.6" stroke="#6aa3e4" stroke-width="1"/><circle cx="268.4" cy="613.6" r="5.9" fill="none" stroke="#ffff00" stroke-width="1"/><path d="M264.9 607.6L271.9 619.6M271.9 607.6L264.9 619.6" stroke="#6aa3e4" stroke-width="1"/><circle cx="284.3" cy="613.6" r="5.9" fill="none" stroke="#ffff00" stroke-width="1"/><path d="M280.8 607.6L287.8 619.6M287.8 607.6L280.8 619.6" stroke="#6aa3e4" stroke-width="1"/><path d="M254 622.5H270.5M282 622.5H299M276.5 609V625" stroke="#6aa3e4" stroke-width="1"/><circle cx="268.4" cy="636.4" r="5.9" fill="none" stroke="#dca46a" stroke-width="1"/><path d="M264.9 630.4L271.9 642.4M271.9 630.4L264.9 642.4" stroke="#6aa3e4" stroke-width="1"/><circle cx="284.3" cy="636.4" r="5.9" fill="none" stroke="#dca46a" stroke-width="1"/><path d="M280.8 630.4L287.8 642.4M287.8 630.4L280.8 642.4" stroke="#6aa3e4" stroke-width="1"/><circle cx="261" cy="649.7" r="5.9" fill="none" stroke="#dca46a" stroke-width="1"/><path d="M257.5 643.7L264.5 655.7M264.5 643.7L257.5 655.7" stroke="#6aa3e4" stroke-width="1"/><circle cx="276.2" cy="649.7" r="5.9" fill="none" stroke="#ffff00" stroke-width="1"/><path d="M272.7 643.7L279.7 655.7M279.7 643.7L272.7 655.7" stroke="#6aa3e4" stroke-width="1"/><circle cx="291.8" cy="649.7" r="5.9" fill="none" stroke="#dca46a" stroke-width="1"/><path d="M288.3 643.7L295.3 655.7M295.3 643.7L288.3 655.7" stroke="#6aa3e4" stroke-width="1"/><path d="M254 659.5H270.5M282 659.5H299M276.5 630V664" stroke="#6aa3e4" stroke-width="1"/></g></svg>
<div class="t" style="left:12px;top:753px;width:304px;text-align:center;letter-spacing:-0.35px">Wymiennik DN150</div>
</body></html>
